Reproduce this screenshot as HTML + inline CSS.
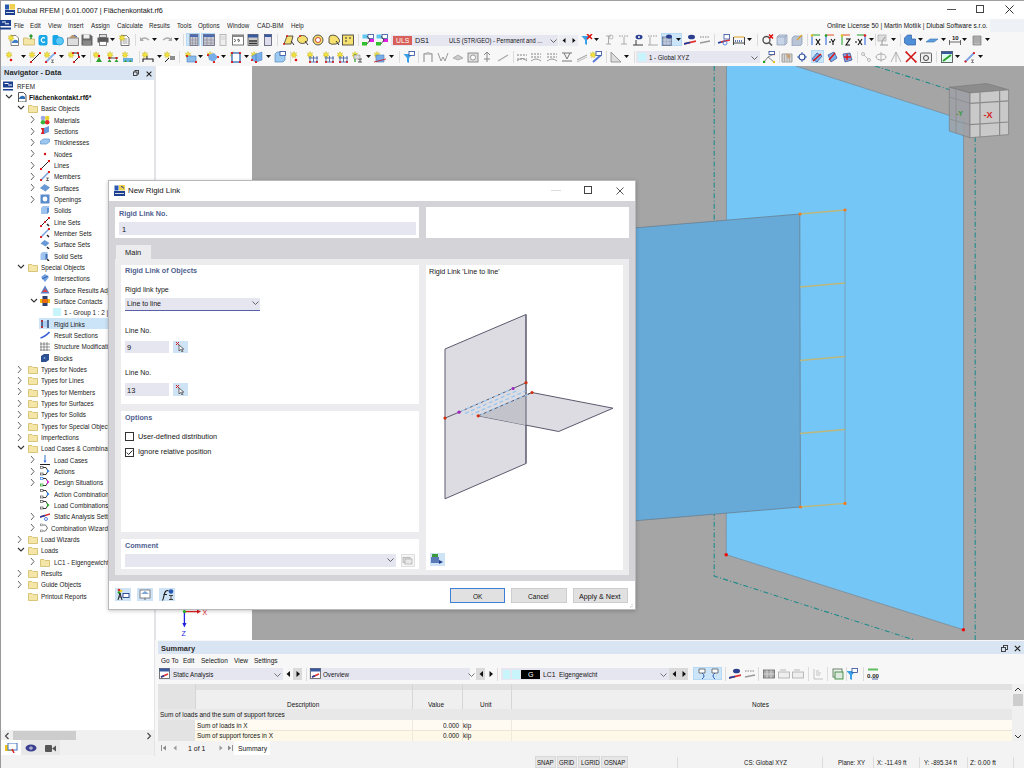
<!DOCTYPE html><html><head><meta charset="utf-8"><style>
html,body{margin:0;padding:0;width:1024px;height:768px;overflow:hidden;background:#f3f3f3;font-family:"Liberation Sans", sans-serif}
body>div,body>svg{position:absolute}
.t{position:absolute;white-space:nowrap;line-height:10px;transform-origin:0 50%;-webkit-font-smoothing:antialiased}
</style></head><body>
<div style="left:0px;top:0px;width:1024px;height:19px;background:#ffffff"></div>
<div style="left:0px;top:19px;width:1024px;height:13px;background:#f9f9f9"></div>
<div style="left:990px;top:19px;width:34px;height:13px;background:#eef2f7"></div>
<div style="left:0px;top:32px;width:1024px;height:34px;background:#f7f7f7"></div>
<div style="left:0px;top:0px;width:1px;height:768px;background:#9a9a9a"></div>
<div style="left:0px;top:0px;width:1024px;height:1px;background:#a0a0a0"></div>
<div class="t" style="left:17px;top:5.60px;font-size:8px;font-weight:400;color:#141414;transform:scaleX(0.900);">Dlubal RFEM | 6.01.0007 | Flächenkontakt.rf6</div>
<div style="left:947px;top:9px;width:9px;height:1px;background:#555"></div>
<div style="left:976px;top:5px;width:8px;height:8px;border:1px solid #444;box-sizing:border-box"></div>
<svg style="left:1005px;top:5px" width="9" height="9" viewBox="0 0 9 9"><path d="M0.5 0.5L8.5 8.5M8.5 0.5L0.5 8.5" stroke="#333" stroke-width="1"/></svg>
<div class="t" style="left:14px;top:20.60px;font-size:7.8px;font-weight:400;color:#1e1e1e;transform:scaleX(0.800);">File</div>
<div class="t" style="left:30px;top:20.60px;font-size:7.8px;font-weight:400;color:#1e1e1e;transform:scaleX(0.800);">Edit</div>
<div class="t" style="left:47.5px;top:20.60px;font-size:7.8px;font-weight:400;color:#1e1e1e;transform:scaleX(0.800);">View</div>
<div class="t" style="left:68px;top:20.60px;font-size:7.8px;font-weight:400;color:#1e1e1e;transform:scaleX(0.800);">Insert</div>
<div class="t" style="left:90.5px;top:20.60px;font-size:7.8px;font-weight:400;color:#1e1e1e;transform:scaleX(0.800);">Assign</div>
<div class="t" style="left:116.5px;top:20.60px;font-size:7.8px;font-weight:400;color:#1e1e1e;transform:scaleX(0.800);">Calculate</div>
<div class="t" style="left:149px;top:20.60px;font-size:7.8px;font-weight:400;color:#1e1e1e;transform:scaleX(0.800);">Results</div>
<div class="t" style="left:176.5px;top:20.60px;font-size:7.8px;font-weight:400;color:#1e1e1e;transform:scaleX(0.800);">Tools</div>
<div class="t" style="left:197.5px;top:20.60px;font-size:7.8px;font-weight:400;color:#1e1e1e;transform:scaleX(0.800);">Options</div>
<div class="t" style="left:226.5px;top:20.60px;font-size:7.8px;font-weight:400;color:#1e1e1e;transform:scaleX(0.800);">Window</div>
<div class="t" style="left:257px;top:20.60px;font-size:7.8px;font-weight:400;color:#1e1e1e;transform:scaleX(0.800);">CAD-BIM</div>
<div class="t" style="left:290.5px;top:20.60px;font-size:7.8px;font-weight:400;color:#1e1e1e;transform:scaleX(0.800);">Help</div>
<div class="t" style="left:827px;top:20.60px;font-size:7.8px;font-weight:400;color:#141414;transform:scaleX(0.828);">Online License 50 | Martin Motlík | Dlubal Software s.r.o.</div>
<div style="left:186px;top:32.5px;width:13.5px;height:13.5px;background:#cde5f8;border:1px solid #b5d8f5;box-sizing:border-box"></div>
<div style="left:201px;top:32.5px;width:13.699999999999989px;height:13.5px;background:#cde5f8;border:1px solid #b5d8f5;box-sizing:border-box"></div>
<div style="left:660.8px;top:33px;width:21.5px;height:13px;background:#cde5f8;border:1px solid #b5d8f5;box-sizing:border-box"></div>
<div style="left:810.8px;top:50px;width:13.700000000000045px;height:13px;background:#cde5f8;border:1px solid #b5d8f5;box-sizing:border-box"></div>
<svg style="left:7.7px;top:33.5px" width="12" height="12" viewBox="0 0 12 12"><path d="M3 1.5h5l2.5 2.5v7.5h-7.5z" fill="#fff" stroke="#666" stroke-width=".8"/><path d="M4 8q3-4 6-1v2h-6z" fill="#3f7fc5"/><path d="M3 0.5l.8 1.9 2-.6-1.2 1.7 1.7 1.2-2 .2.1 2-1.4-1.4-1.4 1.4.1-2-2-.2 1.7-1.2-1.2-1.7 2 .6z" fill="#f2e33a" stroke="#c8b020" stroke-width=".4"/></svg>
<svg style="left:22.9px;top:33.5px" width="12" height="12" viewBox="0 0 12 12"><path d="M0.5 4h4l1 1h6v6h-11z" fill="#f3e6a6" stroke="#cbb56a" stroke-width=".8"/><path d="M8 5V1M6.5 2.5L8 1l1.5 1.5" stroke="#2a9a2a" stroke-width="1.4" fill="none"/></svg>
<svg style="left:36.6px;top:33.5px" width="12" height="12" viewBox="0 0 12 12"><rect x="1.5" y="1" width="9" height="10.5" rx="2" fill="#18a8e8"/><path d="M8 4.2a2.3 2.3 0 1 0 0 3.6" stroke="#fff" stroke-width="1.2" fill="none"/></svg>
<svg style="left:51.6px;top:33.5px" width="12" height="12" viewBox="0 0 12 12"><rect x="0.5" y="1" width="6" height="10" rx="1.5" fill="#18a8e8"/><circle cx="7.5" cy="7" r="4" fill="#5ac8f8" stroke="#1898d8" stroke-width=".8"/></svg>
<svg style="left:67.2px;top:33.5px" width="12" height="12" viewBox="0 0 12 12"><rect x="0.5" y="4" width="11" height="7.5" fill="#ddd" stroke="#777" stroke-width=".8"/><path d="M2 4l3-3h3l2 3z" fill="#b89870"/><path d="M7 1l3 2" stroke="#3060c0" stroke-width="1"/></svg>
<svg style="left:81.3px;top:33.5px" width="12" height="12" viewBox="0 0 12 12"><path d="M0.5 0.5h9l2 2v9h-11z" fill="#666"/><rect x="2.5" y="0.5" width="6" height="4" fill="#eee"/><rect x="2" y="6.5" width="8" height="5" fill="#888"/></svg>
<svg style="left:96.5px;top:33.5px" width="12" height="12" viewBox="0 0 12 12"><rect x="2.5" y="0.5" width="7" height="3" fill="#ddd" stroke="#666" stroke-width=".8"/><rect x="0.5" y="3.5" width="11" height="5" fill="#5a5a5a"/><rect x="2.5" y="7.5" width="7" height="4" fill="#fff" stroke="#666" stroke-width=".8"/></svg>
<svg style="left:119.0px;top:33.5px" width="12" height="12" viewBox="0 0 12 12"><path d="M2 1.5h5.5l2.5 2.5v7.5h-8z" fill="#fff" stroke="#555" stroke-width=".8"/><path d="M3.5 5h5M3.5 7h5M3.5 9h5" stroke="#777" stroke-width=".7"/><path d="M3 0.5l.8 1.9 2-.6-1.2 1.7 1.7 1.2-2 .2.1 2-1.4-1.4-1.4 1.4.1-2-2-.2 1.7-1.2-1.2-1.7 2 .6z" fill="#f2e33a" stroke="#c8b020" stroke-width=".4"/></svg>
<svg style="left:138.5px;top:33.5px" width="12" height="12" viewBox="0 0 12 12"><path d="M2 6q3-4 8 0" stroke="#aaa" stroke-width="1.3" fill="none"/><path d="M1 3v4h4z" fill="#aaa"/></svg>
<svg style="left:161.0px;top:33.5px" width="12" height="12" viewBox="0 0 12 12"><path d="M2 6q5-4 8 0" stroke="#aaa" stroke-width="1.3" fill="none"/><path d="M11 3v4h-4z" fill="#aaa"/></svg>
<svg style="left:188.0px;top:33.5px" width="12" height="12" viewBox="0 0 12 12"><rect x="2" y="0.5" width="8" height="11" fill="#c8c8d0" stroke="#667" stroke-width=".8"/><rect x="2" y="0.5" width="8" height="2.5" fill="#4a6ab0"/><path d="M4.5 3v8.5M7.5 3v8.5M2 6h8M2 9h8" stroke="#889" stroke-width=".6"/></svg>
<svg style="left:202.5px;top:33.5px" width="12" height="12" viewBox="0 0 12 12"><rect x="0.5" y="0.5" width="11" height="11" fill="#c8c8d0" stroke="#667" stroke-width=".8"/><rect x="0.5" y="0.5" width="11" height="2.5" fill="#4a6ab0"/><path d="M4 3v8.5M8 3v8.5M.5 6h11M.5 9h11" stroke="#889" stroke-width=".6"/></svg>
<svg style="left:217.0px;top:33.5px" width="12" height="12" viewBox="0 0 12 12"><rect x="3" y="0.5" width="6" height="11" fill="#eee" stroke="#aaa" stroke-width=".8"/><path d="M4 3h4M4 5h4" stroke="#bbb" stroke-width=".6"/></svg>
<svg style="left:232.0px;top:33.5px" width="12" height="12" viewBox="0 0 12 12"><rect x="0.5" y="1" width="11" height="10" fill="#fff" stroke="#666" stroke-width=".9"/><rect x="0.5" y="1" width="11" height="2" fill="#888"/><path d="M2 5l2 1.5-2 1.5M5 6h2M6 5l2 1.5-2 1.5" stroke="#333" stroke-width=".7" fill="none"/></svg>
<svg style="left:247.0px;top:33.5px" width="12" height="12" viewBox="0 0 12 12"><rect x="1" y="0.5" width="10" height="11" fill="#ccc" stroke="#555" stroke-width=".8"/><rect x="1" y="0.5" width="10" height="3" fill="#3a5aa0"/><path d="M2 7h8M2 9.5h8" stroke="#333" stroke-width="1.3"/></svg>
<svg style="left:261.7px;top:33.5px" width="12" height="12" viewBox="0 0 12 12"><rect x="2.5" y="0.5" width="7" height="11" fill="#dde" stroke="#556" stroke-width=".8"/><rect x="2.5" y="0.5" width="7" height="2.5" fill="#3a5aa0"/></svg>
<svg style="left:282.6px;top:33.5px" width="12" height="12" viewBox="0 0 12 12"><path d="M1 10l3-8h6l-2 8z" fill="#f5e070" stroke="#333" stroke-width=".8"/><circle cx="1" cy="10" r="1" fill="#e02020"/><circle cx="4" cy="2" r="1" fill="#e02020"/><path d="M8 7l3 4" stroke="#333" stroke-width="1"/></svg>
<svg style="left:297.0px;top:33.5px" width="12" height="12" viewBox="0 0 12 12"><ellipse cx="5.5" cy="5.5" rx="5" ry="4" fill="#f5e070" stroke="#333" stroke-width=".8"/><circle cx="3" cy="2" r="1" fill="#e02020"/><path d="M8 7l3 4" stroke="#333" stroke-width="1"/></svg>
<svg style="left:312.0px;top:33.5px" width="12" height="12" viewBox="0 0 12 12"><circle cx="6" cy="6" r="5" fill="#f5e070" stroke="#333" stroke-width=".8"/><circle cx="6" cy="6" r="2.5" fill="#fff" stroke="#c02020" stroke-width=".8"/></svg>
<svg style="left:327.5px;top:33.5px" width="12" height="12" viewBox="0 0 12 12"><path d="M1 4q0-3 4-3t6 4-3 5-7-1z" fill="#f5e070" stroke="#333" stroke-width=".8"/><path d="M8 7l3 4" stroke="#333" stroke-width="1"/></svg>
<svg style="left:342.0px;top:33.5px" width="12" height="12" viewBox="0 0 12 12"><rect x="0.5" y="1" width="11" height="10" fill="#f5e070" stroke="#333" stroke-width=".8"/><path d="M3 4h2M3 7h2M7 4h2" stroke="#333" stroke-width="1"/></svg>
<svg style="left:361.7px;top:33.5px" width="12" height="12" viewBox="0 0 12 12"><rect x="0.5" y="0.5" width="5" height="4" fill="#60c8f0"/><rect x="6" y="0.5" width="5.5" height="4" fill="#fff" stroke="#3050a0" stroke-width=".8"/><rect x="7" y="5" width="5" height="3" fill="#e020e0"/><rect x="0" y="8" width="5" height="3.5" fill="#30c030"/><path d="M5 2l3 4-3 4" stroke="#333" stroke-width=".8" fill="none"/></svg>
<svg style="left:376.0px;top:33.5px" width="12" height="12" viewBox="0 0 12 12"><rect x="0.5" y="0.5" width="5" height="4" fill="#60c8f0"/><rect x="6" y="0.5" width="5.5" height="4" fill="#fff" stroke="#3050a0" stroke-width=".8"/><rect x="7" y="5" width="5" height="3" fill="#e020e0"/><rect x="0" y="8" width="5" height="3.5" fill="#30c030"/><path d="M5 2l3 4-3 4" stroke="#333" stroke-width=".8" fill="none"/></svg>
<svg style="left:580.6px;top:33.5px" width="12" height="12" viewBox="0 0 12 12"><path d="M0.5 2h9l-3.5 4v5l-2-1v-4z" fill="#3aa0e8"/><path d="M6 0l5 5M11 0l-5 5" stroke="#e01010" stroke-width="1.5"/></svg>
<svg style="left:603.0px;top:33.5px" width="12" height="12" viewBox="0 0 12 12"><path d="M3 2h5M5.5 2v8M3 10h5" stroke="#aaa" stroke-width="1" fill="none"/><circle cx="8" cy="3" r="2" fill="none" stroke="#aaa" stroke-width=".8"/></svg>
<svg style="left:617.7px;top:33.5px" width="12" height="12" viewBox="0 0 12 12"><path d="M1 2h10" stroke="#999" stroke-width="1" stroke-dasharray="1.5 1"/><path d="M6 3v7M3 10h6" stroke="#aaa" stroke-width="1"/></svg>
<svg style="left:632.0px;top:33.5px" width="12" height="12" viewBox="0 0 12 12"><ellipse cx="7" cy="3" rx="3.5" ry="2.3" fill="#2a3f8f"/><circle cx="7" cy="3" r="1" fill="#fff"/><path d="M4 6v5M1 11h10" stroke="#3a3a3a" stroke-width="1"/></svg>
<svg style="left:647.0px;top:33.5px" width="12" height="12" viewBox="0 0 12 12"><path d="M1 2h10" stroke="#999" stroke-width="1" stroke-dasharray="1.5 1"/><path d="M3 3v8M1 11h10" stroke="#aaa" stroke-width="1"/></svg>
<svg style="left:662.0px;top:33.5px" width="12" height="12" viewBox="0 0 12 12"><rect x="0.5" y="3" width="9" height="8.5" fill="#98a8c0" stroke="#5a6a8a" stroke-width=".7"/><path d="M3 3v8M6 3v8M.5 6h9M.5 9h9" stroke="#eef" stroke-width=".5"/><ellipse cx="7" cy="2.5" rx="3" ry="2" fill="#2a3f8f"/></svg>
<svg style="left:684.0px;top:33.5px" width="12" height="12" viewBox="0 0 12 12"><path d="M0 10l12-3" stroke="#e03030" stroke-width="1.8"/><path d="M0 10l6-1.5" stroke="#1f3f9f" stroke-width="1.8"/><ellipse cx="7.5" cy="3" rx="3.5" ry="2.3" fill="#2a3f8f"/></svg>
<svg style="left:698.8px;top:33.5px" width="12" height="12" viewBox="0 0 12 12"><path d="M1 3h10" stroke="#777" stroke-width=".9" stroke-dasharray="1.5 1"/><path d="M1 9l10-2" stroke="#999" stroke-width="1.4"/></svg>
<svg style="left:718.0px;top:33.5px" width="12" height="12" viewBox="0 0 12 12"><path d="M0 9l7-2" stroke="#1f3f9f" stroke-width="1.8"/><path d="M3 8l9-2" stroke="#e03030" stroke-width="1.4"/><rect x="6" y="0.5" width="5.5" height="4.5" fill="#fff" stroke="#3050a0" stroke-width=".8"/><circle cx="7" cy="9" r="2" fill="none" stroke="#3070e0" stroke-width=".8"/></svg>
<svg style="left:733.0px;top:33.5px" width="12" height="12" viewBox="0 0 12 12"><path d="M0.5 3v8M11.5 3v8M.5 9h11" stroke="#333" stroke-width=".9"/><path d="M2 7h8" stroke="#3050a0" stroke-width="1.3" stroke-dasharray="1 1"/><path d="M1 3h10" stroke="#e0a020" stroke-width="1"/></svg>
<svg style="left:761.8px;top:33.5px" width="12" height="12" viewBox="0 0 12 12"><circle cx="4.5" cy="6" r="3.5" fill="none" stroke="#555" stroke-width="1.4"/><path d="M7 8.5l3 3" stroke="#555" stroke-width="1.6"/><path d="M7 0.5l4 4M11 0.5l-4 4" stroke="#e01010" stroke-width="1.5"/></svg>
<svg style="left:775.5px;top:33.5px" width="12" height="12" viewBox="0 0 12 12"><path d="M1 3l2-2h8v8l-2 2h-8z" fill="#c8d4e8" stroke="#8898b0" stroke-width=".7"/><path d="M1 3h8v8M9 3l2-2" stroke="#8898b0" stroke-width=".7" fill="none"/></svg>
<svg style="left:791.0px;top:33.5px" width="12" height="12" viewBox="0 0 12 12"><path d="M1 4l2-2h8v8l-2 2h-8z" fill="#b8c4d8" stroke="#8898b0" stroke-width=".7"/><path d="M6 6l5-5" stroke="#e0a020" stroke-width="1.2"/></svg>
<svg style="left:809.7px;top:33.5px" width="12" height="12" viewBox="0 0 12 12"><path d="M2 1h8" stroke="#20a020" stroke-width="1"/><path d="M2 1v10" stroke="#1f5fe0" stroke-width="1"/><circle cx="2" cy="1.5" r="1.3" fill="#e0c020"/><path d="M6 5l4 6M10 5l-4 6" stroke="#111" stroke-width="1.2"/></svg>
<svg style="left:824.0px;top:33.5px" width="12" height="12" viewBox="0 0 12 12"><path d="M2 1h8" stroke="#e05020" stroke-width="1"/><path d="M2 1v10" stroke="#1f5fe0" stroke-width="1"/><circle cx="2" cy="1.5" r="1.3" fill="#20a020"/><path d="M5 8h2M7 5l2 3 2-3M9 8v3" stroke="#111" stroke-width="1.1" fill="none"/></svg>
<svg style="left:840.0px;top:33.5px" width="12" height="12" viewBox="0 0 12 12"><path d="M2 1h8" stroke="#e05020" stroke-width="1"/><path d="M2 1v10" stroke="#20a020" stroke-width="1"/><circle cx="2" cy="1.5" r="1.3" fill="#e0c020"/><path d="M6 5h4l-4 6h4" stroke="#111" stroke-width="1.1" fill="none"/></svg>
<svg style="left:854.6px;top:33.5px" width="12" height="12" viewBox="0 0 12 12"><path d="M2 1h8" stroke="#20a020" stroke-width="1"/><path d="M10 1v10" stroke="#1f5fe0" stroke-width="1"/><circle cx="10" cy="1.5" r="1.3" fill="#e02020"/><path d="M0 8h2M3 5l4 6M7 5l-4 6" stroke="#111" stroke-width="1.1"/></svg>
<svg style="left:877.0px;top:33.5px" width="12" height="12" viewBox="0 0 12 12"><rect x="1" y="1" width="8" height="6" fill="#ddd" stroke="#aaa" stroke-width=".7"/><path d="M3 11h8M5 7v4M8 3l-3 4" stroke="#999" stroke-width="1"/></svg>
<svg style="left:904.0px;top:33.5px" width="12" height="12" viewBox="0 0 12 12"><path d="M0.5 4l3-3h4v4h4v6h-8l-3-2z" fill="#4f8fd8" stroke="#2f5fa8" stroke-width=".7"/></svg>
<svg style="left:926.0px;top:33.5px" width="12" height="12" viewBox="0 0 12 12"><path d="M0 8l4-3h8l-4 3z" fill="#5aa0e0" stroke="#3a70b0" stroke-width=".6"/></svg>
<svg style="left:949.0px;top:33.5px" width="12" height="12" viewBox="0 0 12 12"><path d="M0.5 6v5M11.5 6v5M.5 8h11" stroke="#444" stroke-width=".8"/><text x="3" y="6" font-size="6" font-family="Liberation Sans" font-weight="700" fill="#222">10</text></svg>
<svg style="left:971.0px;top:33.5px" width="12" height="12" viewBox="0 0 12 12"><path d="M2 2h8v9h-8z" fill="#bbb" stroke="#777" stroke-width=".7"/><path d="M2 4h8M2 6h8M2 8h8" stroke="#888" stroke-width=".6"/></svg>
<svg style="left:110.2px;top:38.0px" width="5" height="3"><path d="M0 0h5l-2.5 3z" fill="#111"/></svg>
<svg style="left:151.5px;top:38.0px" width="5" height="3"><path d="M0 0h5l-2.5 3z" fill="#111"/></svg>
<svg style="left:174.3px;top:38.0px" width="5" height="3"><path d="M0 0h5l-2.5 3z" fill="#111"/></svg>
<svg style="left:593.5px;top:38.0px" width="5" height="3"><path d="M0 0h5l-2.5 3z" fill="#111"/></svg>
<svg style="left:675.5px;top:38.0px" width="5" height="3"><path d="M0 0h5l-2.5 3z" fill="#111"/></svg>
<svg style="left:747.2px;top:38.0px" width="5" height="3"><path d="M0 0h5l-2.5 3z" fill="#111"/></svg>
<svg style="left:868.5px;top:38.0px" width="5" height="3"><path d="M0 0h5l-2.5 3z" fill="#111"/></svg>
<svg style="left:891.3px;top:38.0px" width="5" height="3"><path d="M0 0h5l-2.5 3z" fill="#111"/></svg>
<svg style="left:917.5px;top:38.0px" width="5" height="3"><path d="M0 0h5l-2.5 3z" fill="#111"/></svg>
<svg style="left:940.5px;top:38.0px" width="5" height="3"><path d="M0 0h5l-2.5 3z" fill="#111"/></svg>
<svg style="left:962.1px;top:38.0px" width="5" height="3"><path d="M0 0h5l-2.5 3z" fill="#111"/></svg>
<svg style="left:984.5px;top:38.0px" width="5" height="3"><path d="M0 0h5l-2.5 3z" fill="#111"/></svg>
<div style="left:134.8px;top:34px;width:1px;height:12px;background:#dcdcdc"></div>
<div style="left:182.6px;top:34px;width:1px;height:12px;background:#dcdcdc"></div>
<div style="left:277px;top:34px;width:1px;height:12px;background:#dcdcdc"></div>
<div style="left:358px;top:34px;width:1px;height:12px;background:#dcdcdc"></div>
<div style="left:713.5px;top:34px;width:1px;height:12px;background:#dcdcdc"></div>
<div style="left:756.5px;top:34px;width:1px;height:12px;background:#dcdcdc"></div>
<div style="left:807px;top:34px;width:1px;height:12px;background:#dcdcdc"></div>
<div style="left:875px;top:34px;width:1px;height:12px;background:#dcdcdc"></div>
<div style="left:899.6px;top:34px;width:1px;height:12px;background:#dcdcdc"></div>
<svg style="left:6.0px;top:50.5px" width="12" height="12" viewBox="0 0 12 12"><path d="M3 0.5l.8 1.9 2-.6-1.2 1.7 1.7 1.2-2 .2.1 2-1.4-1.4-1.4 1.4.1-2-2-.2 1.7-1.2-1.2-1.7 2 .6z" fill="#f2e33a" stroke="#c8b020" stroke-width=".4"/><circle cx="5" cy="9" r="1.3" fill="#e01010"/></svg>
<svg style="left:29.0px;top:50.5px" width="12" height="12" viewBox="0 0 12 12"><path d="M3 0.5l.8 1.9 2-.6-1.2 1.7 1.7 1.2-2 .2.1 2-1.4-1.4-1.4 1.4.1-2-2-.2 1.7-1.2-1.2-1.7 2 .6z" fill="#f2e33a" stroke="#c8b020" stroke-width=".4"/><path d="M2 11L11 2" stroke="#222" stroke-width="1"/><circle cx="2" cy="11" r="1.1" fill="#e01010"/><circle cx="11" cy="2" r="1.1" fill="#e01010"/></svg>
<svg style="left:43.8px;top:50.5px" width="12" height="12" viewBox="0 0 12 12"><path d="M3 0.5l.8 1.9 2-.6-1.2 1.7 1.7 1.2-2 .2.1 2-1.4-1.4-1.4 1.4.1-2-2-.2 1.7-1.2-1.2-1.7 2 .6z" fill="#f2e33a" stroke="#c8b020" stroke-width=".4"/><path d="M2 11L11 2" stroke="#8ab0e8" stroke-width="1.8"/><circle cx="2" cy="11" r="1.1" fill="#e01010"/><circle cx="11" cy="2" r="1.1" fill="#e01010"/><path d="M7 9h3M8.5 9v2.5M7 11.5h3" stroke="#444" stroke-width=".6"/></svg>
<svg style="left:67.8px;top:50.5px" width="12" height="12" viewBox="0 0 12 12"><path d="M3 0.5l.8 1.9 2-.6-1.2 1.7 1.7 1.2-2 .2.1 2-1.4-1.4-1.4 1.4.1-2-2-.2 1.7-1.2-1.2-1.7 2 .6z" fill="#f2e33a" stroke="#c8b020" stroke-width=".4"/><path d="M5 2h5l1 4-5 5" stroke="#222" stroke-width="1" fill="none"/><circle cx="5" cy="2" r="1.1" fill="#e01010"/><circle cx="10" cy="2" r="1.1" fill="#e01010"/><circle cx="11" cy="6" r="1.1" fill="#e01010"/><circle cx="6" cy="11" r="1.1" fill="#e01010"/></svg>
<svg style="left:92.6px;top:50.5px" width="12" height="12" viewBox="0 0 12 12"><path d="M3 0.5l.8 1.9 2-.6-1.2 1.7 1.7 1.2-2 .2.1 2-1.4-1.4-1.4 1.4.1-2-2-.2 1.7-1.2-1.2-1.7 2 .6z" fill="#f2e33a" stroke="#c8b020" stroke-width=".4"/><path d="M3 11l3-5 3 5z" fill="#30a030"/><circle cx="6" cy="5" r="1.2" fill="#e01010"/></svg>
<svg style="left:107.0px;top:50.5px" width="12" height="12" viewBox="0 0 12 12"><path d="M3 0.5l.8 1.9 2-.6-1.2 1.7 1.7 1.2-2 .2.1 2-1.4-1.4-1.4 1.4.1-2-2-.2 1.7-1.2-1.2-1.7 2 .6z" fill="#f2e33a" stroke="#c8b020" stroke-width=".4"/><path d="M0.5 11l2-3 2 3zM7.5 11l2-3 2 3z" fill="#30a030"/><path d="M1 7h10" stroke="#222" stroke-width=".8"/><circle cx="2.5" cy="7" r="1.1" fill="#e01010"/><circle cx="9.5" cy="7" r="1.1" fill="#e01010"/></svg>
<svg style="left:122.0px;top:50.5px" width="12" height="12" viewBox="0 0 12 12"><path d="M3 0.5l.8 1.9 2-.6-1.2 1.7 1.7 1.2-2 .2.1 2-1.4-1.4-1.4 1.4.1-2-2-.2 1.7-1.2-1.2-1.7 2 .6z" fill="#f2e33a" stroke="#c8b020" stroke-width=".4"/><path d="M1 7h10v4h-10z" fill="#6ab0e0"/><path d="M2 11l1.5-2 1.5 2zM7 11l1.5-2 1.5 2z" fill="#30a030"/></svg>
<svg style="left:142.4px;top:50.5px" width="12" height="12" viewBox="0 0 12 12"><path d="M3 0.5l.8 1.9 2-.6-1.2 1.7 1.7 1.2-2 .2.1 2-1.4-1.4-1.4 1.4.1-2-2-.2 1.7-1.2-1.2-1.7 2 .6z" fill="#f2e33a" stroke="#c8b020" stroke-width=".4"/><path d="M1 11V8h10v3" stroke="#222" stroke-width="1.1" fill="none"/><path d="M5 5v3" stroke="#222" stroke-width=".9"/></svg>
<svg style="left:164.0px;top:50.5px" width="12" height="12" viewBox="0 0 12 12"><path d="M3 0.5l.8 1.9 2-.6-1.2 1.7 1.7 1.2-2 .2.1 2-1.4-1.4-1.4 1.4.1-2-2-.2 1.7-1.2-1.2-1.7 2 .6z" fill="#f2e33a" stroke="#c8b020" stroke-width=".4"/><path d="M1 11l4-4M6 8h5M6 6h5" stroke="#222" stroke-width="1" fill="none"/></svg>
<svg style="left:185.4px;top:50.5px" width="12" height="12" viewBox="0 0 12 12"><path d="M3 0.5l.8 1.9 2-.6-1.2 1.7 1.7 1.2-2 .2.1 2-1.4-1.4-1.4 1.4.1-2-2-.2 1.7-1.2-1.2-1.7 2 .6z" fill="#f2e33a" stroke="#c8b020" stroke-width=".4"/><path d="M2 5h9v6h-9z" fill="#8abce8" stroke="#4a80c0" stroke-width=".6"/><circle cx="2" cy="5" r="1.1" fill="#e01010"/><circle cx="11" cy="11" r="1.1" fill="#e01010"/></svg>
<svg style="left:206.5px;top:50.5px" width="12" height="12" viewBox="0 0 12 12"><path d="M3 0.5l.8 1.9 2-.6-1.2 1.7 1.7 1.2-2 .2.1 2-1.4-1.4-1.4 1.4.1-2-2-.2 1.7-1.2-1.2-1.7 2 .6z" fill="#f2e33a" stroke="#c8b020" stroke-width=".4"/><path d="M1 4l6-2 4 4-4 5-5-2z" fill="#7aaee8"/><circle cx="1" cy="4" r="1.1" fill="#e01010"/><circle cx="11" cy="6" r="1.1" fill="#e01010"/><circle cx="7" cy="11" r="1.1" fill="#e01010"/></svg>
<svg style="left:230.0px;top:50.5px" width="12" height="12" viewBox="0 0 12 12"><path d="M3 0.5l.8 1.9 2-.6-1.2 1.7 1.7 1.2-2 .2.1 2-1.4-1.4-1.4 1.4.1-2-2-.2 1.7-1.2-1.2-1.7 2 .6z" fill="#f2e33a" stroke="#c8b020" stroke-width=".4"/><rect x="2" y="2" width="8" height="9" fill="#fff" stroke="#4a80c0" stroke-width="1.5"/><circle cx="2" cy="2" r="1.1" fill="#e01010"/><circle cx="10" cy="2" r="1.1" fill="#e01010"/><circle cx="2" cy="11" r="1.1" fill="#e01010"/><circle cx="10" cy="11" r="1.1" fill="#e01010"/></svg>
<svg style="left:251.0px;top:50.5px" width="12" height="12" viewBox="0 0 12 12"><path d="M3 0.5l.8 1.9 2-.6-1.2 1.7 1.7 1.2-2 .2.1 2-1.4-1.4-1.4 1.4.1-2-2-.2 1.7-1.2-1.2-1.7 2 .6z" fill="#f2e33a" stroke="#c8b020" stroke-width=".4"/><path d="M1 5l4-2v8l-4-2zM5 3l6-2v8l-6 2z" fill="#7aaee8" stroke="#4a80c0" stroke-width=".5"/><circle cx="1" cy="9" r="1.1" fill="#e01010"/><circle cx="5" cy="11" r="1.1" fill="#e01010"/></svg>
<svg style="left:274.0px;top:50.5px" width="12" height="12" viewBox="0 0 12 12"><path d="M1 3l2-2h8v8l-2 2h-8z" fill="#9ccaf0" stroke="#5a8ac0" stroke-width=".7"/><rect x="6" y="0.5" width="5.5" height="4" fill="#fff" stroke="#2a4a9a" stroke-width=".8"/></svg>
<svg style="left:291.0px;top:50.5px" width="12" height="12" viewBox="0 0 12 12"><path d="M3 0.5l.8 1.9 2-.6-1.2 1.7 1.7 1.2-2 .2.1 2-1.4-1.4-1.4 1.4.1-2-2-.2 1.7-1.2-1.2-1.7 2 .6z" fill="#f2e33a" stroke="#c8b020" stroke-width=".4"/><circle cx="5" cy="9" r="1.3" fill="#e01010"/></svg>
<svg style="left:307.0px;top:50.5px" width="12" height="12" viewBox="0 0 12 12"><path d="M3 0.5l.8 1.9 2-.6-1.2 1.7 1.7 1.2-2 .2.1 2-1.4-1.4-1.4 1.4.1-2-2-.2 1.7-1.2-1.2-1.7 2 .6z" fill="#f2e33a" stroke="#c8b020" stroke-width=".4"/><path d="M2 7h9M2 11h9M3 5v6M6.5 5v6M10 5v6" stroke="#3a5aa0" stroke-width=".8"/><circle cx="3" cy="11" r="1" fill="#e01010"/><circle cx="10" cy="11" r="1" fill="#e01010"/></svg>
<svg style="left:322.7px;top:50.5px" width="12" height="12" viewBox="0 0 12 12"><path d="M3 0.5l.8 1.9 2-.6-1.2 1.7 1.7 1.2-2 .2.1 2-1.4-1.4-1.4 1.4.1-2-2-.2 1.7-1.2-1.2-1.7 2 .6z" fill="#f2e33a" stroke="#c8b020" stroke-width=".4"/><path d="M2 7h9M2 11h9M3 5v6M6.5 5v6M10 5v6" stroke="#3a5aa0" stroke-width=".8"/><circle cx="3" cy="11" r="1" fill="#e01010"/><circle cx="10" cy="11" r="1" fill="#e01010"/></svg>
<svg style="left:337.0px;top:50.5px" width="12" height="12" viewBox="0 0 12 12"><path d="M3 0.5l.8 1.9 2-.6-1.2 1.7 1.7 1.2-2 .2.1 2-1.4-1.4-1.4 1.4.1-2-2-.2 1.7-1.2-1.2-1.7 2 .6z" fill="#f2e33a" stroke="#c8b020" stroke-width=".4"/><path d="M2 7h9M2 11h9M3 5v6M6.5 5v6M10 5v6" stroke="#3a5aa0" stroke-width=".8"/><circle cx="3" cy="11" r="1" fill="#e01010"/><circle cx="10" cy="11" r="1" fill="#e01010"/></svg>
<svg style="left:352.0px;top:50.5px" width="12" height="12" viewBox="0 0 12 12"><path d="M3 0.5l.8 1.9 2-.6-1.2 1.7 1.7 1.2-2 .2.1 2-1.4-1.4-1.4 1.4.1-2-2-.2 1.7-1.2-1.2-1.7 2 .6z" fill="#f2e33a" stroke="#c8b020" stroke-width=".4"/><path d="M3 3v8" stroke="#20a020" stroke-width="1.2"/><path d="M6 8h4M8 8v3M6 11h4" stroke="#333" stroke-width=".8"/><path d="M2 4h6v4h-6z" fill="#ddd" stroke="#777" stroke-width=".5"/></svg>
<svg style="left:374.0px;top:50.5px" width="12" height="12" viewBox="0 0 12 12"><path d="M3 0.5l.8 1.9 2-.6-1.2 1.7 1.7 1.2-2 .2.1 2-1.4-1.4-1.4 1.4.1-2-2-.2 1.7-1.2-1.2-1.7 2 .6z" fill="#f2e33a" stroke="#c8b020" stroke-width=".4"/><path d="M2 4h8v7h-8z" fill="#7aaee8" stroke="#4a80c0" stroke-width=".6"/><path d="M0 11l12-3" stroke="#e01010" stroke-width=".8"/></svg>
<svg style="left:403.0px;top:50.5px" width="12" height="12" viewBox="0 0 12 12"><path d="M0.5 3h9l-3.5 4v5l-2-1v-4z" fill="#3aa0e8"/><rect x="6" y="0.5" width="5.5" height="4" fill="#fff" stroke="#2a4a9a" stroke-width=".8"/></svg>
<svg style="left:422.0px;top:50.5px" width="12" height="12" viewBox="0 0 12 12"><path d="M2 11V3h8v8" stroke="#999" stroke-width="1.2" fill="none"/><path d="M2 3q4-3 8 0" stroke="#999" stroke-width=".8" fill="none"/></svg>
<svg style="left:436.5px;top:50.5px" width="12" height="12" viewBox="0 0 12 12"><path d="M1 2l3 8 2-4 2 4 3-8" stroke="#999" stroke-width="1" fill="none"/></svg>
<svg style="left:452.0px;top:50.5px" width="12" height="12" viewBox="0 0 12 12"><path d="M1 7l5-3 5 3-5 2z" fill="#ccc" stroke="#999" stroke-width=".7"/></svg>
<svg style="left:466.8px;top:50.5px" width="12" height="12" viewBox="0 0 12 12"><rect x="1" y="2" width="10" height="9" fill="#ddd" stroke="#888" stroke-width=".9"/><circle cx="6" cy="6.5" r="2.5" fill="#fff" stroke="#888" stroke-width=".8"/></svg>
<svg style="left:481.4px;top:50.5px" width="12" height="12" viewBox="0 0 12 12"><path d="M6 1v10M3 4l3-3 3 3M3 8h6" stroke="#888" stroke-width="1" fill="none"/></svg>
<svg style="left:497.0px;top:50.5px" width="12" height="12" viewBox="0 0 12 12"><path d="M1 10l10-6" stroke="#aaa" stroke-width="1.4"/></svg>
<svg style="left:515.6px;top:50.5px" width="12" height="12" viewBox="0 0 12 12"><path d="M1 4h10M1 8h10" stroke="#777" stroke-width=".9" stroke-dasharray="2 1"/><path d="M1 10q5-5 10 0" stroke="#999" stroke-width="1" fill="none"/></svg>
<svg style="left:530.0px;top:50.5px" width="12" height="12" viewBox="0 0 12 12"><path d="M1 3h10M1 6h10" stroke="#777" stroke-width=".9" stroke-dasharray="2 1"/><path d="M1 10q5-4 10 0" stroke="#999" stroke-width="1" fill="none"/></svg>
<svg style="left:545.9px;top:50.5px" width="12" height="12" viewBox="0 0 12 12"><path d="M1 3h10M1 6h10" stroke="#777" stroke-width=".9" stroke-dasharray="2 1"/><path d="M1 10q5-4 10 0" stroke="#999" stroke-width="1" fill="none"/></svg>
<svg style="left:560.5px;top:50.5px" width="12" height="12" viewBox="0 0 12 12"><path d="M1 2h10M3 2l3 6 3-6M1 10h10" stroke="#777" stroke-width="1" fill="none"/></svg>
<svg style="left:576.0px;top:50.5px" width="12" height="12" viewBox="0 0 12 12"><path d="M1 9l10-5" stroke="#999" stroke-width="1"/><path d="M1 11l10-5" stroke="#bbb" stroke-width="1"/></svg>
<svg style="left:590.0px;top:50.5px" width="12" height="12" viewBox="0 0 12 12"><path d="M3 0.5l.8 1.9 2-.6-1.2 1.7 1.7 1.2-2 .2.1 2-1.4-1.4-1.4 1.4.1-2-2-.2 1.7-1.2-1.2-1.7 2 .6z" fill="#f2e33a" stroke="#c8b020" stroke-width=".4"/><path d="M3 11l8-7" stroke="#5a7ad8" stroke-width="2"/><rect x="6" y="0.5" width="5.5" height="4" fill="#fff" stroke="#2a4a9a" stroke-width=".8"/></svg>
<svg style="left:610.0px;top:50.5px" width="12" height="12" viewBox="0 0 12 12"><path d="M1 11V1l10 10z" fill="#ddd" stroke="#888" stroke-width=".8"/></svg>
<svg style="left:762.8px;top:50.5px" width="12" height="12" viewBox="0 0 12 12"><path d="M5 6l6-3M5 6l-4 5M5 6l6 5" stroke="#666" stroke-width=".8"/><circle cx="11" cy="3" r="1.3" fill="#e05020"/><circle cx="1" cy="11" r="1.3" fill="#20a020"/><circle cx="11" cy="11" r="1.3" fill="#e0c020"/><rect x="6" y="0.5" width="5.5" height="3" fill="#fff" stroke="#2a4a9a" stroke-width=".8"/></svg>
<svg style="left:781.0px;top:50.5px" width="12" height="12" viewBox="0 0 12 12"><path d="M1 3h10v8h-10z" fill="#eee" stroke="#666" stroke-width=".6"/><path d="M1 5h10M1 7h10M1 9h10M3.5 3v8M6 3v8M8.5 3v8" stroke="#888" stroke-width=".5"/><path d="M5 2l5 3-3 3z" fill="#c8a070"/></svg>
<svg style="left:796.0px;top:50.5px" width="12" height="12" viewBox="0 0 12 12"><path d="M1 6h10M6 1v10" stroke="#2a4a9a" stroke-width=".8"/><circle cx="6" cy="6" r="3" fill="#fff" stroke="#2a4a9a" stroke-width="1.2"/></svg>
<svg style="left:811.0px;top:50.5px" width="12" height="12" viewBox="0 0 12 12"><path d="M1 8l5-6 5 3-5 6z" fill="#7aaee8" stroke="#2a4a9a" stroke-width=".7"/><path d="M2 10l8-7" stroke="#e01010" stroke-width="1.3"/></svg>
<svg style="left:826.0px;top:50.5px" width="12" height="12" viewBox="0 0 12 12"><path d="M2 4l6-3 3 6-6 4z" fill="#7aaee8" stroke="#2a4a9a" stroke-width=".7"/><path d="M3 9l6-7" stroke="#e01010" stroke-width="1.3"/></svg>
<svg style="left:841.0px;top:50.5px" width="12" height="12" viewBox="0 0 12 12"><path d="M2 3l7-1 2 7-7 2z" fill="#8a9ed8" stroke="#2a4a9a" stroke-width=".7"/><path d="M3 6h7M6 3v6" stroke="#e01010" stroke-width="1.3"/></svg>
<svg style="left:860.0px;top:50.5px" width="12" height="12" viewBox="0 0 12 12"><circle cx="3" cy="3" r="1.5" fill="none" stroke="#aaa" stroke-width=".8"/><circle cx="9" cy="9" r="1.5" fill="none" stroke="#aaa" stroke-width=".8"/><path d="M4 4l4 4" stroke="#aaa" stroke-width=".8"/></svg>
<svg style="left:875.0px;top:50.5px" width="12" height="12" viewBox="0 0 12 12"><ellipse cx="6" cy="6" rx="5" ry="3" fill="none" stroke="#aaa" stroke-width="1"/><path d="M6 1v10" stroke="#aaa" stroke-width=".8"/></svg>
<svg style="left:890.0px;top:50.5px" width="12" height="12" viewBox="0 0 12 12"><path d="M6 1l-5 10M6 1l5 10M6 1v10" stroke="#aaa" stroke-width=".9" fill="none"/></svg>
<svg style="left:905.0px;top:50.5px" width="12" height="12" viewBox="0 0 12 12"><path d="M1 1l10 10M11 1l-10 10" stroke="#d01010" stroke-width="1.5"/><circle cx="1.3" cy="1.3" r="1" fill="#d01010"/><circle cx="10.7" cy="10.7" r="1" fill="#d01010"/></svg>
<svg style="left:920.0px;top:50.5px" width="12" height="12" viewBox="0 0 12 12"><rect x="0.5" y="2" width="11" height="9.5" rx="1" fill="#eee" stroke="#555" stroke-width=".9"/><circle cx="6" cy="7" r="2.5" fill="none" stroke="#444" stroke-width="1"/></svg>
<svg style="left:941.0px;top:50.5px" width="12" height="12" viewBox="0 0 12 12"><rect x="0.5" y="0.5" width="11" height="11" fill="#dfe" stroke="#555" stroke-width=".9"/><rect x="0.5" y="0.5" width="11" height="2.5" fill="#3a5aa0"/><path d="M2 10l8-6" stroke="#30a030" stroke-width="2"/></svg>
<svg style="left:964.0px;top:50.5px" width="12" height="12" viewBox="0 0 12 12"><path d="M1 11L10 2" stroke="#7aa0e0" stroke-width="1.8"/><circle cx="1.5" cy="10.5" r="1.1" fill="#e01010"/><circle cx="10" cy="2" r="1.1" fill="#e01010"/><path d="M7 9h3M8.5 9v2.5M7 11.5h3" stroke="#444" stroke-width=".6"/></svg>
<svg style="left:20.9px;top:55.0px" width="5" height="3"><path d="M0 0h5l-2.5 3z" fill="#111"/></svg>
<svg style="left:58.5px;top:55.0px" width="5" height="3"><path d="M0 0h5l-2.5 3z" fill="#111"/></svg>
<svg style="left:81.1px;top:55.0px" width="5" height="3"><path d="M0 0h5l-2.5 3z" fill="#111"/></svg>
<svg style="left:156.5px;top:55.0px" width="5" height="3"><path d="M0 0h5l-2.5 3z" fill="#111"/></svg>
<svg style="left:198.2px;top:55.0px" width="5" height="3"><path d="M0 0h5l-2.5 3z" fill="#111"/></svg>
<svg style="left:220.5px;top:55.0px" width="5" height="3"><path d="M0 0h5l-2.5 3z" fill="#111"/></svg>
<svg style="left:243.5px;top:55.0px" width="5" height="3"><path d="M0 0h5l-2.5 3z" fill="#111"/></svg>
<svg style="left:265.5px;top:55.0px" width="5" height="3"><path d="M0 0h5l-2.5 3z" fill="#111"/></svg>
<svg style="left:366.2px;top:55.0px" width="5" height="3"><path d="M0 0h5l-2.5 3z" fill="#111"/></svg>
<svg style="left:388.5px;top:55.0px" width="5" height="3"><path d="M0 0h5l-2.5 3z" fill="#111"/></svg>
<svg style="left:623.5px;top:55.0px" width="5" height="3"><path d="M0 0h5l-2.5 3z" fill="#111"/></svg>
<svg style="left:954.5px;top:55.0px" width="5" height="3"><path d="M0 0h5l-2.5 3z" fill="#111"/></svg>
<svg style="left:977.5px;top:55.0px" width="5" height="3"><path d="M0 0h5l-2.5 3z" fill="#111"/></svg>
<div style="left:89.5px;top:51px;width:1px;height:12px;background:#dcdcdc"></div>
<div style="left:138.7px;top:51px;width:1px;height:12px;background:#dcdcdc"></div>
<div style="left:179px;top:51px;width:1px;height:12px;background:#dcdcdc"></div>
<div style="left:289.6px;top:51px;width:1px;height:12px;background:#dcdcdc"></div>
<div style="left:398.5px;top:51px;width:1px;height:12px;background:#dcdcdc"></div>
<div style="left:418px;top:51px;width:1px;height:12px;background:#dcdcdc"></div>
<div style="left:512.8px;top:51px;width:1px;height:12px;background:#dcdcdc"></div>
<div style="left:606px;top:51px;width:1px;height:12px;background:#dcdcdc"></div>
<div style="left:633.5px;top:51px;width:1px;height:12px;background:#dcdcdc"></div>
<div style="left:778.5px;top:51px;width:1px;height:12px;background:#dcdcdc"></div>
<div style="left:856.7px;top:51px;width:1px;height:12px;background:#dcdcdc"></div>
<div style="left:936px;top:51px;width:1px;height:12px;background:#dcdcdc"></div>
<div style="left:390.7px;top:34.8px;width:167px;height:10.8px;background:#e6e6f1"></div>
<div style="left:393px;top:35.5px;width:19px;height:9.5px;background:#d9605a"></div>
<div class="t" style="left:395.5px;top:35.60px;font-size:7.4px;font-weight:400;color:#fff;transform:scaleX(0.919);">ULS</div>
<div class="t" style="left:415px;top:35.60px;font-size:7.4px;font-weight:400;color:#141414;transform:scaleX(0.976);">DS1</div>
<div class="t" style="left:449.3px;top:35.60px;font-size:7.4px;font-weight:400;color:#141414;transform:scaleX(0.776);">ULS (STR/GEO) - Permanent and ...</div>
<svg style="left:550px;top:38.5px" width="7" height="5" viewBox="0 0 7 5"><path d="M0.5 0.5l3 3 3-3" fill="none" stroke="#555" stroke-width=".9"/></svg>
<div style="left:559px;top:34.8px;width:18.5px;height:10.8px;background:#ececf3"></div>
<svg style="left:561.8px;top:37.7px" width="4" height="5" viewBox="0 0 4 5"><path d="M3.5 0L0.5 2.5 3.5 5z" fill="#111"/></svg>
<svg style="left:571.5px;top:37.7px" width="4" height="5" viewBox="0 0 4 5"><path d="M0.5 0L3.5 2.5 0.5 5z" fill="#111"/></svg>
<div style="left:636.4px;top:51.4px;width:124px;height:11.6px;background:#e6e6f1"></div>
<div style="left:638px;top:53px;width:8px;height:8px;background:#c8f4fb"></div>
<div class="t" style="left:649px;top:52.60px;font-size:7.4px;font-weight:400;color:#141414;transform:scaleX(0.829);">1 - Global XYZ</div>
<svg style="left:751px;top:55.5px" width="7" height="5" viewBox="0 0 7 5"><path d="M0.5 0.5l3 3 3-3" fill="none" stroke="#555" stroke-width=".9"/></svg>
<svg style="left:0px;top:20px" width="11" height="10" viewBox="0 0 11 10"><rect x="0" y="0" width="11" height="6" fill="#1d3f8f"/><rect x="2" y="1.5" width="4" height="1" fill="#fff"/><rect x="5" y="3.3" width="4" height="1" fill="#fff"/><rect x="0" y="7.5" width="11" height="2" fill="#1d3f8f"/></svg>
<svg style="left:5px;top:4px" width="10" height="11" viewBox="0 0 10 11"><rect x="0" y="6" width="10" height="5" fill="#1d3f8f"/><rect x="1" y="8" width="8" height=".8" fill="#fff"/><rect x="0" y="0.5" width="4" height="5" fill="#2a5ab0"/><rect x="4.5" y="0" width="5.5" height="5.5" fill="#f0d050"/></svg>
<div style="left:1px;top:66px;width:153px;height:14px;background:#d9e5f2"></div>
<div class="t" style="left:4px;top:68.30px;font-size:7.4px;font-weight:700;color:#2b2b2b;transform:scaleX(1.011);">Navigator - Data</div>
<svg style="left:133px;top:70px" width="6" height="6" viewBox="0 0 6 6"><rect x="2" y="0.5" width="3.5" height="3.5" fill="none" stroke="#333" stroke-width=".9"/><rect x="0.5" y="2" width="3.5" height="3.5" fill="#d9e5f2" stroke="#333" stroke-width=".9"/></svg>
<svg style="left:145.5px;top:70.5px" width="6" height="6" viewBox="0 0 6 6"><path d="M.6 .6l4.8 4.8M5.4 .6l-4.8 4.8" stroke="#222" stroke-width="1.1"/></svg>
<div style="left:1px;top:80px;width:153px;height:650px;background:#ffffff"></div>
<div style="left:154px;top:66px;width:2px;height:690px;background:#e3e3e8"></div>
<div style="left:1px;top:730px;width:153px;height:10px;background:#f0f0f0"></div>
<div style="left:13px;top:731px;width:63px;height:9px;background:#cdcdcd"></div>
<svg style="left:4px;top:731.5px" width="6" height="8" viewBox="0 0 6 8"><path d="M4.5 1L1.5 4l3 3" fill="none" stroke="#444" stroke-width="1.1"/></svg>
<svg style="left:146px;top:731.5px" width="6" height="8" viewBox="0 0 6 8"><path d="M1.5 1l3 3-3 3" fill="none" stroke="#444" stroke-width="1.1"/></svg>
<div style="left:1px;top:740px;width:153px;height:15px;background:#f0f0f0"></div>
<div style="left:1px;top:740px;width:20px;height:15px;background:#ffffff"></div>
<div style="left:21px;top:740px;width:19px;height:15px;background:#e8e8e8"></div>
<div style="left:40px;top:740px;width:20px;height:15px;background:#e8e8e8"></div>
<div style="left:1px;top:80px;width:153px;height:650px;overflow:hidden">
<svg style="position:absolute;left:2.0px;top:0.75px" width="10" height="10" viewBox="0 0 10 10"><rect x="0" y="0.5" width="10" height="6" fill="#1d3f8f"/><rect x="1.5" y="2" width="4" height="1" fill="#fff"/><rect x="5" y="3.5" width="4" height="1" fill="#fff"/><rect x="0" y="8" width="10" height="1.5" fill="#1d3f8f"/></svg>
<div class="t" style="left:15.5px;top:1.65px;font-size:7.3px;font-weight:400;color:#222;transform:scaleX(0.866)">RFEM</div>
<svg style="position:absolute;left:3.5px;top:14.08px" width="8" height="6"><path d="M1 1l3 3 3-3" fill="none" stroke="#333" stroke-width="1.1"/></svg>
<svg style="position:absolute;left:15.5px;top:12.08px" width="10" height="10" viewBox="0 0 10 10"><path d="M1.5 0.5h5l2.5 2.5v7h-7.5z" fill="#fff" stroke="#555" stroke-width="1"/><path d="M2 6q3-4 6-1v2h-6z" fill="#2f6fb5"/></svg>
<div class="t" style="left:28px;top:12.98px;font-size:7.3px;font-weight:700;color:#111;transform:scaleX(0.92)">Flächenkontakt.rf6*</div>
<svg style="position:absolute;left:15.5px;top:25.42px" width="8" height="6"><path d="M1 1l3 3 3-3" fill="none" stroke="#333" stroke-width="1.1"/></svg>
<svg style="position:absolute;left:27.0px;top:23.42px" width="10" height="10" viewBox="0 0 10 10"><path d="M0.5 2.5h3.5l1 1h4.5v6h-9z" fill="#f3e6a6" stroke="#d9c57a" stroke-width="1"/></svg>
<div class="t" style="left:40px;top:24.32px;font-size:7.3px;font-weight:400;color:#222;transform:scaleX(0.866)">Basic Objects</div>
<svg style="position:absolute;left:29.0px;top:35.25px" width="6" height="9"><path d="M1 1l3 3.5-3 3.5" fill="none" stroke="#666" stroke-width="1"/></svg>
<svg style="position:absolute;left:39.0px;top:34.75px" width="10" height="10" viewBox="0 0 10 10"><circle cx="3" cy="3" r="2.3" fill="#9aa8e8"/><circle cx="7.2" cy="3" r="2.3" fill="#e8d230"/><circle cx="3" cy="7.3" r="2.3" fill="#38b838"/><circle cx="7.2" cy="7.3" r="2.3" fill="#e02828"/></svg>
<div class="t" style="left:52.5px;top:35.65px;font-size:7.3px;font-weight:400;color:#222;transform:scaleX(0.866)">Materials</div>
<svg style="position:absolute;left:29.0px;top:46.58px" width="6" height="9"><path d="M1 1l3 3.5-3 3.5" fill="none" stroke="#666" stroke-width="1"/></svg>
<svg style="position:absolute;left:39.0px;top:46.08px" width="10" height="10" viewBox="0 0 10 10"><path d="M1 2h4v1.5h-1v3h1v1.5h-4v-1.5h1v-3h-1z" fill="#d82828"/><path d="M4 2l5-2v6l-5 2z" fill="#6b98d8"/></svg>
<div class="t" style="left:52.5px;top:46.98px;font-size:7.3px;font-weight:400;color:#222;transform:scaleX(0.866)">Sections</div>
<svg style="position:absolute;left:29.0px;top:57.91px" width="6" height="9"><path d="M1 1l3 3.5-3 3.5" fill="none" stroke="#666" stroke-width="1"/></svg>
<svg style="position:absolute;left:39.0px;top:57.41px" width="10" height="10" viewBox="0 0 10 10"><path d="M0.5 4l3-2h6v3l-3 2h-6z" fill="#9cc8f0" stroke="#6a9cd0" stroke-width=".8"/></svg>
<div class="t" style="left:52.5px;top:58.31px;font-size:7.3px;font-weight:400;color:#222;transform:scaleX(0.866)">Thicknesses</div>
<svg style="position:absolute;left:29.0px;top:69.25px" width="6" height="9"><path d="M1 1l3 3.5-3 3.5" fill="none" stroke="#666" stroke-width="1"/></svg>
<svg style="position:absolute;left:39.0px;top:68.75px" width="10" height="10" viewBox="0 0 10 10"><circle cx="5" cy="5" r="1.2" fill="#d01010"/></svg>
<div class="t" style="left:52.5px;top:69.65px;font-size:7.3px;font-weight:400;color:#222;transform:scaleX(0.866)">Nodes</div>
<svg style="position:absolute;left:29.0px;top:80.58px" width="6" height="9"><path d="M1 1l3 3.5-3 3.5" fill="none" stroke="#666" stroke-width="1"/></svg>
<svg style="position:absolute;left:39.0px;top:80.08px" width="10" height="10" viewBox="0 0 10 10"><path d="M1 9L9 1" stroke="#222" stroke-width="1"/><circle cx="1" cy="9" r="1.2" fill="#e01010"/><circle cx="9" cy="1" r="1.2" fill="#e01010"/></svg>
<div class="t" style="left:52.5px;top:80.98px;font-size:7.3px;font-weight:400;color:#222;transform:scaleX(0.866)">Lines</div>
<svg style="position:absolute;left:29.0px;top:91.91px" width="6" height="9"><path d="M1 1l3 3.5-3 3.5" fill="none" stroke="#666" stroke-width="1"/></svg>
<svg style="position:absolute;left:39.0px;top:91.41px" width="10" height="10" viewBox="0 0 10 10"><path d="M1 9L9 1" stroke="#7aa0e0" stroke-width="1.6"/><circle cx="1" cy="9" r="1.1" fill="#e01010"/><circle cx="9" cy="1" r="1.1" fill="#e01010"/><path d="M6 7h3M7.5 7v2.5M6 9.5h3" stroke="#444" stroke-width=".7"/></svg>
<div class="t" style="left:52.5px;top:92.31px;font-size:7.3px;font-weight:400;color:#222;transform:scaleX(0.866)">Members</div>
<svg style="position:absolute;left:29.0px;top:103.25px" width="6" height="9"><path d="M1 1l3 3.5-3 3.5" fill="none" stroke="#666" stroke-width="1"/></svg>
<svg style="position:absolute;left:39.0px;top:102.75px" width="10" height="10" viewBox="0 0 10 10"><path d="M0.5 5l4-3.5 5 3-4 3.5z" fill="#6a9ad6" stroke="#4d7fbf" stroke-width=".6"/></svg>
<div class="t" style="left:52.5px;top:103.65px;font-size:7.3px;font-weight:400;color:#222;transform:scaleX(0.866)">Surfaces</div>
<svg style="position:absolute;left:29.0px;top:114.58px" width="6" height="9"><path d="M1 1l3 3.5-3 3.5" fill="none" stroke="#666" stroke-width="1"/></svg>
<svg style="position:absolute;left:39.0px;top:114.08px" width="10" height="10" viewBox="0 0 10 10"><rect x="0.5" y="0.5" width="9" height="9" fill="#5b8ccc"/><circle cx="5" cy="5" r="2.4" fill="#fff"/></svg>
<div class="t" style="left:52.5px;top:114.98px;font-size:7.3px;font-weight:400;color:#222;transform:scaleX(0.866)">Openings</div>
<svg style="position:absolute;left:39.0px;top:125.41px" width="10" height="10" viewBox="0 0 10 10"><path d="M1 3l2-2h6v6l-2 2h-6z" fill="#9dc3ee"/><path d="M7 3h2v4l-2 2z" fill="#5e8fd0"/></svg>
<div class="t" style="left:52.5px;top:126.31px;font-size:7.3px;font-weight:400;color:#222;transform:scaleX(0.866)">Solids</div>
<svg style="position:absolute;left:39.0px;top:136.75px" width="10" height="10" viewBox="0 0 10 10"><path d="M1 9L9 1" stroke="#222" stroke-width="1"/><circle cx="1" cy="9" r="1.1" fill="#e01010"/><circle cx="9" cy="1" r="1.1" fill="#e01010"/><circle cx="5" cy="5" r="1.1" fill="#e01010"/><path d="M7 7l2 2" stroke="#222" stroke-width="1.4"/></svg>
<div class="t" style="left:52.5px;top:137.65px;font-size:7.3px;font-weight:400;color:#222;transform:scaleX(0.866)">Line Sets</div>
<svg style="position:absolute;left:39.0px;top:148.08px" width="10" height="10" viewBox="0 0 10 10"><path d="M1 9L9 1" stroke="#7aa0e0" stroke-width="1.6"/><circle cx="1" cy="9" r="1.1" fill="#e01010"/><circle cx="9" cy="1" r="1.1" fill="#e01010"/><path d="M7 7l2 2" stroke="#222" stroke-width="1.4"/></svg>
<div class="t" style="left:52.5px;top:148.98px;font-size:7.3px;font-weight:400;color:#222;transform:scaleX(0.866)">Member Sets</div>
<svg style="position:absolute;left:39.0px;top:159.41px" width="10" height="10" viewBox="0 0 10 10"><path d="M0.5 4.5l4-3.5 5 3-4 3.5z" fill="#6a9ad6"/><path d="M7 8l2 2" stroke="#222" stroke-width="1.4"/></svg>
<div class="t" style="left:52.5px;top:160.31px;font-size:7.3px;font-weight:400;color:#222;transform:scaleX(0.866)">Surface Sets</div>
<svg style="position:absolute;left:39.0px;top:170.75px" width="10" height="10" viewBox="0 0 10 10"><path d="M0.5 3l2-2h5v6l-2 2h-5z" fill="#9dc3ee"/><path d="M5.5 3h2v4l-2 2z" fill="#3e6fb0"/><path d="M7 8l2 2" stroke="#222" stroke-width="1.4"/></svg>
<div class="t" style="left:52.5px;top:171.65px;font-size:7.3px;font-weight:400;color:#222;transform:scaleX(0.866)">Solid Sets</div>
<svg style="position:absolute;left:15.5px;top:184.08px" width="8" height="6"><path d="M1 1l3 3 3-3" fill="none" stroke="#333" stroke-width="1.1"/></svg>
<svg style="position:absolute;left:27.0px;top:182.08px" width="10" height="10" viewBox="0 0 10 10"><path d="M0.5 2.5h3.5l1 1h4.5v6h-9z" fill="#f3e6a6" stroke="#d9c57a" stroke-width="1"/></svg>
<div class="t" style="left:40px;top:182.98px;font-size:7.3px;font-weight:400;color:#222;transform:scaleX(0.866)">Special Objects</div>
<svg style="position:absolute;left:39.0px;top:193.41px" width="10" height="10" viewBox="0 0 10 10"><path d="M1 4l4-3 4 3-4 5z" fill="#6fa0e0"/><path d="M2 6l6-3" stroke="#3060b0" stroke-width="1"/></svg>
<div class="t" style="left:52.5px;top:194.31px;font-size:7.3px;font-weight:400;color:#222;transform:scaleX(0.866)">Intersections</div>
<svg style="position:absolute;left:39.0px;top:204.74px" width="10" height="10" viewBox="0 0 10 10"><path d="M5 0.5l4.5 8h-9z" fill="#5a7fc8"/><path d="M2 7l3-3 3 3z" fill="#e04040"/></svg>
<div class="t" style="left:52.5px;top:205.64px;font-size:7.3px;font-weight:400;color:#222;transform:scaleX(0.866)">Surface Results Adjustments</div>
<svg style="position:absolute;left:28.5px;top:218.08px" width="8" height="6"><path d="M1 1l3 3 3-3" fill="none" stroke="#333" stroke-width="1.1"/></svg>
<svg style="position:absolute;left:39.0px;top:216.08px" width="10" height="10" viewBox="0 0 10 10"><rect x="0" y="3" width="10" height="4" fill="#f6b800"/><rect x="2.5" y="0" width="5" height="10" fill="#2b3f6f"/><rect x="2.5" y="3" width="5" height="4" fill="#ee6a10"/></svg>
<div class="t" style="left:52.5px;top:216.98px;font-size:7.3px;font-weight:400;color:#222;transform:scaleX(0.866)">Surface Contacts</div>
<svg style="position:absolute;left:52.0px;top:227.41px" width="10" height="10" viewBox="0 0 10 10"><rect x="0" y="1" width="8" height="8" fill="#c8f4fb"/></svg>
<div class="t" style="left:62.5px;top:228.31px;font-size:7.3px;font-weight:400;color:#222;transform:scaleX(0.866)">1 - Group 1 : 2 | Surface contact</div>
<div style="position:absolute;left:38px;top:238.24px;width:120px;height:11px;background:#cce4f7"></div>
<svg style="position:absolute;left:39.0px;top:238.74px" width="10" height="10" viewBox="0 0 10 10"><path d="M2 1v8M8 1v8" stroke="#223a70" stroke-width="1.4"/><path d="M3 3h4M3 5h4M3 7h4" stroke="#6a9ee8" stroke-width=".6"/><circle cx="2" cy="2" r="1" fill="#d02020"/><circle cx="2" cy="8" r="1" fill="#d02020"/></svg>
<div class="t" style="left:52.5px;top:239.64px;font-size:7.3px;font-weight:400;color:#222;transform:scaleX(0.866)">Rigid Links</div>
<svg style="position:absolute;left:39.0px;top:250.08px" width="10" height="10" viewBox="0 0 10 10"><path d="M0.5 8q4-1 9-6" stroke="#3a62d8" stroke-width="1.6" fill="none"/></svg>
<div class="t" style="left:52.5px;top:250.98px;font-size:7.3px;font-weight:400;color:#222;transform:scaleX(0.866)">Result Sections</div>
<svg style="position:absolute;left:39.0px;top:261.41px" width="10" height="10" viewBox="0 0 10 10"><path d="M1 1v9M4 1v9M7 1v9M0 3h10M0 6h10M0 9h10" stroke="#666" stroke-width=".7"/></svg>
<div class="t" style="left:52.5px;top:262.31px;font-size:7.3px;font-weight:400;color:#222;transform:scaleX(0.866)">Structure Modifications</div>
<svg style="position:absolute;left:39.0px;top:272.74px" width="10" height="10" viewBox="0 0 10 10"><path d="M1 3l3-2h5v6l-3 2h-5z" fill="#2b4f8f"/><circle cx="4.5" cy="5" r="1" fill="#7aa0e0"/></svg>
<div class="t" style="left:52.5px;top:273.64px;font-size:7.3px;font-weight:400;color:#222;transform:scaleX(0.866)">Blocks</div>
<svg style="position:absolute;left:16.0px;top:284.57px" width="6" height="9"><path d="M1 1l3 3.5-3 3.5" fill="none" stroke="#666" stroke-width="1"/></svg>
<svg style="position:absolute;left:27.0px;top:284.07px" width="10" height="10" viewBox="0 0 10 10"><path d="M0.5 2.5h3.5l1 1h4.5v6h-9z" fill="#f3e6a6" stroke="#d9c57a" stroke-width="1"/></svg>
<div class="t" style="left:40px;top:284.97px;font-size:7.3px;font-weight:400;color:#222;transform:scaleX(0.866)">Types for Nodes</div>
<svg style="position:absolute;left:16.0px;top:295.91px" width="6" height="9"><path d="M1 1l3 3.5-3 3.5" fill="none" stroke="#666" stroke-width="1"/></svg>
<svg style="position:absolute;left:27.0px;top:295.41px" width="10" height="10" viewBox="0 0 10 10"><path d="M0.5 2.5h3.5l1 1h4.5v6h-9z" fill="#f3e6a6" stroke="#d9c57a" stroke-width="1"/></svg>
<div class="t" style="left:40px;top:296.31px;font-size:7.3px;font-weight:400;color:#222;transform:scaleX(0.866)">Types for Lines</div>
<svg style="position:absolute;left:16.0px;top:307.24px" width="6" height="9"><path d="M1 1l3 3.5-3 3.5" fill="none" stroke="#666" stroke-width="1"/></svg>
<svg style="position:absolute;left:27.0px;top:306.74px" width="10" height="10" viewBox="0 0 10 10"><path d="M0.5 2.5h3.5l1 1h4.5v6h-9z" fill="#f3e6a6" stroke="#d9c57a" stroke-width="1"/></svg>
<div class="t" style="left:40px;top:307.64px;font-size:7.3px;font-weight:400;color:#222;transform:scaleX(0.866)">Types for Members</div>
<svg style="position:absolute;left:16.0px;top:318.57px" width="6" height="9"><path d="M1 1l3 3.5-3 3.5" fill="none" stroke="#666" stroke-width="1"/></svg>
<svg style="position:absolute;left:27.0px;top:318.07px" width="10" height="10" viewBox="0 0 10 10"><path d="M0.5 2.5h3.5l1 1h4.5v6h-9z" fill="#f3e6a6" stroke="#d9c57a" stroke-width="1"/></svg>
<div class="t" style="left:40px;top:318.97px;font-size:7.3px;font-weight:400;color:#222;transform:scaleX(0.866)">Types for Surfaces</div>
<svg style="position:absolute;left:16.0px;top:329.91px" width="6" height="9"><path d="M1 1l3 3.5-3 3.5" fill="none" stroke="#666" stroke-width="1"/></svg>
<svg style="position:absolute;left:27.0px;top:329.41px" width="10" height="10" viewBox="0 0 10 10"><path d="M0.5 2.5h3.5l1 1h4.5v6h-9z" fill="#f3e6a6" stroke="#d9c57a" stroke-width="1"/></svg>
<div class="t" style="left:40px;top:330.31px;font-size:7.3px;font-weight:400;color:#222;transform:scaleX(0.866)">Types for Solids</div>
<svg style="position:absolute;left:16.0px;top:341.24px" width="6" height="9"><path d="M1 1l3 3.5-3 3.5" fill="none" stroke="#666" stroke-width="1"/></svg>
<svg style="position:absolute;left:27.0px;top:340.74px" width="10" height="10" viewBox="0 0 10 10"><path d="M0.5 2.5h3.5l1 1h4.5v6h-9z" fill="#f3e6a6" stroke="#d9c57a" stroke-width="1"/></svg>
<div class="t" style="left:40px;top:341.64px;font-size:7.3px;font-weight:400;color:#222;transform:scaleX(0.866)">Types for Special Objects</div>
<svg style="position:absolute;left:16.0px;top:352.57px" width="6" height="9"><path d="M1 1l3 3.5-3 3.5" fill="none" stroke="#666" stroke-width="1"/></svg>
<svg style="position:absolute;left:27.0px;top:352.07px" width="10" height="10" viewBox="0 0 10 10"><path d="M0.5 2.5h3.5l1 1h4.5v6h-9z" fill="#f3e6a6" stroke="#d9c57a" stroke-width="1"/></svg>
<div class="t" style="left:40px;top:352.97px;font-size:7.3px;font-weight:400;color:#222;transform:scaleX(0.866)">Imperfections</div>
<svg style="position:absolute;left:15.5px;top:365.41px" width="8" height="6"><path d="M1 1l3 3 3-3" fill="none" stroke="#333" stroke-width="1.1"/></svg>
<svg style="position:absolute;left:27.0px;top:363.41px" width="10" height="10" viewBox="0 0 10 10"><path d="M0.5 2.5h3.5l1 1h4.5v6h-9z" fill="#f3e6a6" stroke="#d9c57a" stroke-width="1"/></svg>
<div class="t" style="left:40px;top:364.31px;font-size:7.3px;font-weight:400;color:#222;transform:scaleX(0.866)">Load Cases &amp; Combinations</div>
<svg style="position:absolute;left:29.0px;top:375.24px" width="6" height="9"><path d="M1 1l3 3.5-3 3.5" fill="none" stroke="#666" stroke-width="1"/></svg>
<svg style="position:absolute;left:39.0px;top:374.74px" width="10" height="10" viewBox="0 0 10 10"><path d="M5 0v7" stroke="#3070d8" stroke-width="1"/><path d="M3.5 5.5L5 8l1.5-2.5z" fill="#3070d8"/><path d="M0 9.5h10" stroke="#222" stroke-width="1"/></svg>
<div class="t" style="left:52.5px;top:375.64px;font-size:7.3px;font-weight:400;color:#222;transform:scaleX(0.866)">Load Cases</div>
<svg style="position:absolute;left:29.0px;top:386.57px" width="6" height="9"><path d="M1 1l3 3.5-3 3.5" fill="none" stroke="#666" stroke-width="1"/></svg>
<svg style="position:absolute;left:39.0px;top:386.07px" width="10" height="10" viewBox="0 0 10 10"><rect x="0.5" y="0.5" width="2.5" height="2" fill="none" stroke="#555" stroke-width=".7"/><rect x="0.5" y="7" width="2.5" height="2" fill="none" stroke="#555" stroke-width=".7"/><path d="M3 1.5h3l2 3.5-2 3.5h-3" fill="none" stroke="#222" stroke-width=".9"/><path d="M7 3l2.5 2-2.5 2z" fill="#2f7ff0"/></svg>
<div class="t" style="left:52.5px;top:386.97px;font-size:7.3px;font-weight:400;color:#222;transform:scaleX(0.866)">Actions</div>
<svg style="position:absolute;left:29.0px;top:397.91px" width="6" height="9"><path d="M1 1l3 3.5-3 3.5" fill="none" stroke="#666" stroke-width="1"/></svg>
<svg style="position:absolute;left:39.0px;top:397.41px" width="10" height="10" viewBox="0 0 10 10"><rect x="0.5" y="0.5" width="2.5" height="2" fill="none" stroke="#2f7ff0" stroke-width=".7"/><rect x="0.5" y="7" width="2.5" height="2" fill="none" stroke="#20a020" stroke-width=".7"/><path d="M3 1.5h3l2 3.5-2 3.5h-3" fill="none" stroke="#222" stroke-width=".9"/><path d="M7 3l2.5 2-2.5 2z" fill="#e020e0"/></svg>
<div class="t" style="left:52.5px;top:398.31px;font-size:7.3px;font-weight:400;color:#222;transform:scaleX(0.866)">Design Situations</div>
<svg style="position:absolute;left:39.0px;top:408.74px" width="10" height="10" viewBox="0 0 10 10"><rect x="0.5" y="0.5" width="2.5" height="2" fill="none" stroke="#555" stroke-width=".7"/><rect x="0.5" y="7" width="2.5" height="2" fill="none" stroke="#555" stroke-width=".7"/><path d="M3 1.5h3l2 3.5-2 3.5h-3" fill="none" stroke="#222" stroke-width=".9"/><path d="M7 3l2.5 2-2.5 2z" fill="#2f7ff0"/></svg>
<div class="t" style="left:52.5px;top:409.64px;font-size:7.3px;font-weight:400;color:#222;transform:scaleX(0.866)">Action Combinations</div>
<svg style="position:absolute;left:39.0px;top:420.07px" width="10" height="10" viewBox="0 0 10 10"><rect x="0.5" y="0.5" width="2.5" height="2" fill="none" stroke="#555" stroke-width=".7"/><rect x="0.5" y="7" width="2.5" height="2" fill="none" stroke="#555" stroke-width=".7"/><path d="M3 1.5h3l2 3.5-2 3.5h-3" fill="none" stroke="#222" stroke-width=".9"/><path d="M7 3l2.5 2-2.5 2z" fill="#20b020"/></svg>
<div class="t" style="left:52.5px;top:420.97px;font-size:7.3px;font-weight:400;color:#222;transform:scaleX(0.866)">Load Combinations</div>
<svg style="position:absolute;left:29.0px;top:431.90px" width="6" height="9"><path d="M1 1l3 3.5-3 3.5" fill="none" stroke="#666" stroke-width="1"/></svg>
<svg style="position:absolute;left:39.0px;top:431.40px" width="10" height="10" viewBox="0 0 10 10"><path d="M0 6l10-3" stroke="#d03030" stroke-width="1.6"/><path d="M0 6l5-1.5" stroke="#1f3f9f" stroke-width="1.6"/><circle cx="6" cy="8" r="1.5" fill="none" stroke="#4070e0" stroke-width=".9"/></svg>
<div class="t" style="left:52.5px;top:432.30px;font-size:7.3px;font-weight:400;color:#222;transform:scaleX(0.866)">Static Analysis Settings</div>
<svg style="position:absolute;left:29.0px;top:443.24px" width="6" height="9"><path d="M1 1l3 3.5-3 3.5" fill="none" stroke="#666" stroke-width="1"/></svg>
<svg style="position:absolute;left:39.0px;top:442.74px" width="10" height="10" viewBox="0 0 10 10"><rect x="0.5" y="1" width="2" height="1.8" fill="none" stroke="#777" stroke-width=".6"/><rect x="0.5" y="7" width="2" height="1.8" fill="none" stroke="#777" stroke-width=".6"/><path d="M3 2h2.5l2 3-2 3h-2.5" fill="none" stroke="#555" stroke-width=".8"/></svg>
<div class="t" style="left:50px;top:443.64px;font-size:7.3px;font-weight:400;color:#222;transform:scaleX(0.866)">Combination Wizards</div>
<svg style="position:absolute;left:16.0px;top:454.57px" width="6" height="9"><path d="M1 1l3 3.5-3 3.5" fill="none" stroke="#666" stroke-width="1"/></svg>
<svg style="position:absolute;left:27.0px;top:454.07px" width="10" height="10" viewBox="0 0 10 10"><path d="M0.5 2.5h3.5l1 1h4.5v6h-9z" fill="#f3e6a6" stroke="#d9c57a" stroke-width="1"/></svg>
<div class="t" style="left:40px;top:454.97px;font-size:7.3px;font-weight:400;color:#222;transform:scaleX(0.866)">Load Wizards</div>
<svg style="position:absolute;left:15.5px;top:467.40px" width="8" height="6"><path d="M1 1l3 3 3-3" fill="none" stroke="#333" stroke-width="1.1"/></svg>
<svg style="position:absolute;left:27.0px;top:465.40px" width="10" height="10" viewBox="0 0 10 10"><path d="M0.5 2.5h3.5l1 1h4.5v6h-9z" fill="#f3e6a6" stroke="#d9c57a" stroke-width="1"/></svg>
<div class="t" style="left:40px;top:466.30px;font-size:7.3px;font-weight:400;color:#222;transform:scaleX(0.866)">Loads</div>
<svg style="position:absolute;left:29.0px;top:477.24px" width="6" height="9"><path d="M1 1l3 3.5-3 3.5" fill="none" stroke="#666" stroke-width="1"/></svg>
<svg style="position:absolute;left:39.0px;top:476.74px" width="10" height="10" viewBox="0 0 10 10"><path d="M0.5 2.5h3.5l1 1h4.5v6h-9z" fill="#f3e6a6" stroke="#d9c57a" stroke-width="1"/></svg>
<div class="t" style="left:52.5px;top:477.64px;font-size:7.3px;font-weight:400;color:#222;transform:scaleX(0.866)">LC1 - Eigengewicht</div>
<svg style="position:absolute;left:16.0px;top:488.57px" width="6" height="9"><path d="M1 1l3 3.5-3 3.5" fill="none" stroke="#666" stroke-width="1"/></svg>
<svg style="position:absolute;left:27.0px;top:488.07px" width="10" height="10" viewBox="0 0 10 10"><path d="M0.5 2.5h3.5l1 1h4.5v6h-9z" fill="#f3e6a6" stroke="#d9c57a" stroke-width="1"/></svg>
<div class="t" style="left:40px;top:488.97px;font-size:7.3px;font-weight:400;color:#222;transform:scaleX(0.866)">Results</div>
<svg style="position:absolute;left:16.0px;top:499.90px" width="6" height="9"><path d="M1 1l3 3.5-3 3.5" fill="none" stroke="#666" stroke-width="1"/></svg>
<svg style="position:absolute;left:27.0px;top:499.40px" width="10" height="10" viewBox="0 0 10 10"><path d="M0.5 2.5h3.5l1 1h4.5v6h-9z" fill="#f3e6a6" stroke="#d9c57a" stroke-width="1"/></svg>
<div class="t" style="left:40px;top:500.30px;font-size:7.3px;font-weight:400;color:#222;transform:scaleX(0.866)">Guide Objects</div>
<svg style="position:absolute;left:27.0px;top:510.74px" width="10" height="10" viewBox="0 0 10 10"><path d="M0.5 2.5h3.5l1 1h4.5v6h-9z" fill="#f3e6a6" stroke="#d9c57a" stroke-width="1"/></svg>
<div class="t" style="left:40px;top:511.63px;font-size:7.3px;font-weight:400;color:#222;transform:scaleX(0.866)">Printout Reports</div>
</div>
<div style="left:156px;top:66px;width:868px;height:574px;background:#ffffff"></div>
<svg style="left:156px;top:66px" width="868" height="574" viewBox="0 0 868 574"><g transform="translate(-156,-66)">
<rect x="252" y="66" width="772" height="574" fill="#a5a5a5"/>
<path d="M726.5 66L795.7 66L963.5 119.9L963.5 629.8L726.2 554.7Z" fill="#73c6f6"/>
<path d="M795.7 66L963.5 119.9L963.5 629.8L726.2 554.7L726.5 66" fill="none" stroke="#7c8c98" stroke-width=".8"/>
<g stroke="#1f8a8a" stroke-width="1.1" stroke-dasharray="5 2.3 1 2.3" fill="none">
<path d="M714.2 66L714.2 576L914.6 640"/>
<path d="M875 66L949 89.5"/>
<path d="M975.2 137L975.2 640"/>
</g>
<path d="M560 234.2L799.8 214L800.4 507L560 527Z" fill="#67aad7"/>
<path d="M560 234.2L799.8 214L800.4 507L560 527" fill="none" stroke="#6a7f90" stroke-width=".8"/>
<path d="M845 210L845 503.4" stroke="#7a9cb4" stroke-width=".9"/>
<g stroke="#bdb77c" stroke-width="1.3">
<path d="M800 214L845 210"/><path d="M800 287L845 283"/><path d="M800 360.5L845 356.5"/><path d="M800 433.5L845 429.5"/><path d="M800.4 507L845 503.4"/>
</g>
<g fill="#f07a20"><circle cx="800" cy="214" r="1.6"/><circle cx="845" cy="210" r="1.6"/><circle cx="800.4" cy="507" r="1.6"/><circle cx="845" cy="503.4" r="1.6"/></g>

<g fill="#e81010"><circle cx="726.2" cy="554.7" r="1.8"/><circle cx="963.4" cy="629.8" r="1.8"/></g>
<!-- view cube -->
<path d="M949.3 87.2L986.8 83.5L1008.6 89.8L970 92.9Z" fill="#8c8c8c" stroke="#777" stroke-width=".6"/>
<path d="M949.3 87.2L970 92.9L970 137.7L949.3 131Z" fill="#9ea1a6" fill-opacity=".9" stroke="#777" stroke-width=".6"/>
<path d="M970 92.9L1008.6 89.8L1008.6 134.6L970 137.7Z" fill="#c9c9c9" stroke="#808080" stroke-width=".8"/>
<g stroke="#8a8a8a" stroke-width="1.2"><path d="M980 92.2V137"/><path d="M999.6 90.6V135.4"/><path d="M970 103.3L1008.6 100.8"/><path d="M970 124.7L1008.6 122"/>
<path d="M956 89V133.2" stroke-width=".8"/><path d="M949.3 97L970 103.3" stroke-width=".8"/><path d="M949.3 119L970 124.7" stroke-width=".8"/></g>
<text x="983.5" y="118.3" font-family="Liberation Sans" font-size="9" font-weight="700" fill="#d82020">-X</text>
<text x="956" y="116" font-family="Liberation Sans" font-size="7" font-weight="700" fill="#3a9a3a">-Y</text>
<!-- axis indicator -->
<path d="M184.4 611.6H198" stroke="#e02020" stroke-width="1.3"/><path d="M197 609.5L201 611.6L197 613.7Z" fill="#e02020"/>
<path d="M184.4 611.6V624" stroke="#2020e0" stroke-width="1.3"/><path d="M182.3 623L184.4 627.5L186.5 623Z" fill="#2020e0"/>
<circle cx="184.4" cy="611.6" r="1.5" fill="#20c020"/>
<text x="202.5" y="615" font-family="Liberation Sans" font-size="7" fill="#e02020">X</text>
<text x="181.5" y="636" font-family="Liberation Sans" font-size="7" fill="#2020e0">Z</text>
</g></svg>
<div style="left:155px;top:640px;width:869px;height:115px;background:#f7f7f7"></div>
<div style="left:158px;top:641px;width:866px;height:13px;background:#d9e5f2"></div>
<div class="t" style="left:161px;top:643.60px;font-size:7.4px;font-weight:700;color:#2b2b2b;transform:scaleX(1.011);">Summary</div>
<svg style="left:1001px;top:644.5px" width="7" height="7" viewBox="0 0 7 7"><rect x="2.5" y="0.5" width="4" height="4" fill="none" stroke="#333" stroke-width=".9"/><rect x="0.5" y="2.5" width="4" height="4" fill="#d9e5f2" stroke="#333" stroke-width=".9"/></svg>
<svg style="left:1013.5px;top:644.5px" width="7" height="7" viewBox="0 0 7 7"><path d="M.8 .8l5.4 5.4M6.2 .8l-5.4 5.4" stroke="#222" stroke-width="1.2"/></svg>
<div class="t" style="left:161px;top:655.80px;font-size:7.4px;font-weight:400;color:#141414;transform:scaleX(0.882);">Go To</div>
<div class="t" style="left:183.4px;top:655.80px;font-size:7.4px;font-weight:400;color:#141414;transform:scaleX(0.882);">Edit</div>
<div class="t" style="left:201px;top:655.80px;font-size:7.4px;font-weight:400;color:#141414;transform:scaleX(0.882);">Selection</div>
<div class="t" style="left:233.5px;top:655.80px;font-size:7.4px;font-weight:400;color:#141414;transform:scaleX(0.882);">View</div>
<div class="t" style="left:254px;top:655.80px;font-size:7.4px;font-weight:400;color:#141414;transform:scaleX(0.882);">Settings</div>
<div style="left:158.5px;top:668px;width:124px;height:12px;background:#e6e6f1"></div>
<svg style="left:159.3px;top:668.0px" width="12" height="12" viewBox="0 0 12 12"><rect x="0.5" y="0.5" width="10" height="10" fill="#fff" stroke="#555" stroke-width=".8"/><rect x="0.5" y="0.5" width="10" height="3" fill="#3a5aa0"/><path d="M2 9l7-3" stroke="#e03030" stroke-width="1.5"/><path d="M2 9l3-1.3" stroke="#1f3f9f" stroke-width="1.5"/></svg>
<div class="t" style="left:173.2px;top:669.60px;font-size:7.4px;font-weight:400;color:#141414;transform:scaleX(0.845);">Static Analysis</div>
<svg style="left:274px;top:672.5px" width="7" height="5" viewBox="0 0 7 5"><path d="M0.5 0.5l3 3 3-3" fill="none" stroke="#666" stroke-width=".9"/></svg>
<svg style="left:285.5px;top:671px" width="5" height="6" viewBox="0 0 5 6"><path d="M4 0L0.5 3 4 6z" fill="#111"/></svg>
<div style="left:292.7px;top:668px;width:9.3px;height:12px;background:#dadada"></div>
<svg style="left:295.5px;top:671px" width="5" height="6" viewBox="0 0 5 6"><path d="M0.5 0L4 3 0.5 6z" fill="#111"/></svg>
<div style="left:306px;top:668px;width:1px;height:13px;background:#dcdcdc"></div>
<div style="left:308.8px;top:668px;width:161px;height:12px;background:#e6e6f1"></div>
<svg style="left:309.5px;top:668.0px" width="12" height="12" viewBox="0 0 12 12"><rect x="0.5" y="0.5" width="10" height="10" fill="#fff" stroke="#555" stroke-width=".8"/><rect x="0.5" y="0.5" width="10" height="3" fill="#3a5aa0"/><path d="M2 9l7-3" stroke="#e03030" stroke-width="1.5"/><path d="M2 9l3-1.3" stroke="#1f3f9f" stroke-width="1.5"/></svg>
<div class="t" style="left:322.9px;top:669.60px;font-size:7.4px;font-weight:400;color:#141414;transform:scaleX(0.845);">Overview</div>
<svg style="left:467.5px;top:672.5px" width="7" height="5" viewBox="0 0 7 5"><path d="M0.5 0.5l3 3 3-3" fill="none" stroke="#666" stroke-width=".9"/></svg>
<div style="left:476.3px;top:668px;width:9px;height:12px;background:#dadada"></div>
<svg style="left:478.5px;top:671px" width="5" height="6" viewBox="0 0 5 6"><path d="M4 0L0.5 3 4 6z" fill="#111"/></svg>
<svg style="left:488.5px;top:671px" width="5" height="6" viewBox="0 0 5 6"><path d="M0.5 0L4 3 0.5 6z" fill="#111"/></svg>
<div style="left:497px;top:668px;width:1px;height:13px;background:#dcdcdc"></div>
<div style="left:501px;top:668px;width:186.5px;height:12px;background:#e6e6f1"></div>
<div style="left:503px;top:669.5px;width:7.3px;height:9px;background:#c8f4fb"></div>
<div style="left:512.3px;top:669.5px;width:7.7px;height:9px;background:#c8f4fb"></div>
<div style="left:521px;top:669.5px;width:18.5px;height:9px;background:#000"></div>
<div class="t" style="left:527.5px;top:669.60px;font-size:7.4px;font-weight:400;color:#fff;transform:scaleX(0.973);">G</div>
<div class="t" style="left:542.8px;top:669.60px;font-size:7.4px;font-weight:400;color:#141414;transform:scaleX(0.927);">LC1</div>
<div class="t" style="left:559.3px;top:669.60px;font-size:7.4px;font-weight:400;color:#141414;transform:scaleX(0.873);">Eigengewicht</div>
<svg style="left:659.5px;top:672.5px" width="7" height="5" viewBox="0 0 7 5"><path d="M0.5 0.5l3 3 3-3" fill="none" stroke="#666" stroke-width=".9"/></svg>
<div style="left:669px;top:668px;width:9.6px;height:12px;background:#dadada"></div>
<div style="left:679px;top:668px;width:9px;height:12px;background:#dadada"></div>
<svg style="left:671.5px;top:671px" width="5" height="6" viewBox="0 0 5 6"><path d="M4 0L0.5 3 4 6z" fill="#111"/></svg>
<svg style="left:681.5px;top:671px" width="5" height="6" viewBox="0 0 5 6"><path d="M0.5 0L4 3 0.5 6z" fill="#111"/></svg>
<div style="left:693px;top:666.8px;width:29px;height:13.700000000000045px;background:#cde5f8;border:1px solid #b5d8f5;box-sizing:border-box"></div>
<svg style="left:697.0px;top:668.0px" width="12" height="12" viewBox="0 0 12 12"><path d="M2 1h6v4h-6z" fill="#fff" stroke="#555" stroke-width=".8"/><path d="M5 5q4 3 0 6" stroke="#2a5ab0" stroke-width="1" fill="none"/></svg>
<svg style="left:708.0px;top:668.0px" width="12" height="12" viewBox="0 0 12 12"><path d="M4 1h6v4h-6z" fill="#fff" stroke="#555" stroke-width=".8"/><path d="M7 5q-4 3 0 6" stroke="#2a5ab0" stroke-width="1" fill="none"/></svg>
<svg style="left:729.0px;top:668.0px" width="12" height="12" viewBox="0 0 12 12"><path d="M0 10l12-3" stroke="#e03030" stroke-width="1.8"/><path d="M0 10l6-1.5" stroke="#1f3f9f" stroke-width="1.8"/><ellipse cx="7.5" cy="3" rx="3.5" ry="2.3" fill="#2a3f8f"/></svg>
<svg style="left:743.6px;top:668.0px" width="12" height="12" viewBox="0 0 12 12"><path d="M1 3h10" stroke="#777" stroke-width=".9" stroke-dasharray="1.5 1"/><path d="M1 9l10-2" stroke="#999" stroke-width="1.4"/></svg>
<svg style="left:763.0px;top:668.0px" width="12" height="12" viewBox="0 0 12 12"><rect x="0.5" y="2" width="11" height="8" fill="#aaa" stroke="#666" stroke-width=".8"/><path d="M4 2v8M8 2v8M.5 6h11" stroke="#eee" stroke-width=".6"/></svg>
<svg style="left:777.8px;top:668.0px" width="12" height="12" viewBox="0 0 12 12"><rect x="0.5" y="4" width="11" height="6" fill="#eee" stroke="#aaa" stroke-width=".8"/><path d="M2 2h6" stroke="#aaa" stroke-width=".8"/></svg>
<svg style="left:792.4px;top:668.0px" width="12" height="12" viewBox="0 0 12 12"><rect x="0.5" y="4" width="11" height="6" fill="#eee" stroke="#aaa" stroke-width=".8"/><path d="M2 2h6" stroke="#aaa" stroke-width=".8"/></svg>
<svg style="left:812.0px;top:668.0px" width="12" height="12" viewBox="0 0 12 12"><path d="M2 1v10h9M4 3h3M4 5h5M4 7h4" stroke="#bbb" stroke-width=".9" fill="none"/></svg>
<svg style="left:831.5px;top:668.0px" width="12" height="12" viewBox="0 0 12 12"><rect x="1" y="1" width="9" height="8" fill="#eee" stroke="#5a7a5a" stroke-width=".9"/><rect x="3" y="4" width="8" height="7" fill="#dfe9df" stroke="#3a8a3a" stroke-width=".9"/></svg>
<svg style="left:846.0px;top:668.0px" width="12" height="12" viewBox="0 0 12 12"><path d="M0.5 3h9l-3.5 4v5l-2-1v-4z" fill="#3aa0e8"/><rect x="6" y="0.5" width="5.5" height="4" fill="#fff" stroke="#2a4a9a" stroke-width=".8"/></svg>
<svg style="left:866.6px;top:668.0px" width="12" height="12" viewBox="0 0 12 12"><rect x="1" y="0.5" width="10" height="2" fill="#60c060"/><text x="0" y="9.5" font-size="6" font-family="Liberation Sans" font-weight="700" fill="#222" textLength="12" lengthAdjust="spacingAndGlyphs">0.00</text><path d="M5 11h6" stroke="#2a4a9a" stroke-width=".8"/></svg>
<div style="left:725px;top:667px;width:1px;height:14px;background:#dcdcdc"></div>
<div style="left:758px;top:667px;width:1px;height:14px;background:#dcdcdc"></div>
<div style="left:808px;top:667px;width:1px;height:14px;background:#dcdcdc"></div>
<div style="left:827px;top:667px;width:1px;height:14px;background:#dcdcdc"></div>
<div style="left:846px;top:667px;width:1px;height:14px;background:#dcdcdc"></div>
<div style="left:863px;top:667px;width:1px;height:14px;background:#dcdcdc"></div>
<div style="left:158px;top:683.5px;width:854px;height:6px;background:#e1e1e1"></div>
<div style="left:158px;top:689.5px;width:854px;height:19.5px;background:#efefef"></div>
<div style="left:158px;top:683.5px;width:36.5px;height:25.5px;background:#e3e3e3"></div>
<div style="left:194.5px;top:683.5px;width:1px;height:25.5px;background:#d6d6d6"></div>
<div style="left:412px;top:683.5px;width:1px;height:25.5px;background:#d6d6d6"></div>
<div style="left:461.6px;top:683.5px;width:1px;height:25.5px;background:#d6d6d6"></div>
<div style="left:511px;top:683.5px;width:1px;height:25.5px;background:#d6d6d6"></div>
<div class="t" style="left:287px;top:700.30px;font-size:7.4px;font-weight:400;color:#141414;transform:scaleX(0.873);">Description</div>
<div class="t" style="left:428px;top:700.30px;font-size:7.4px;font-weight:400;color:#141414;transform:scaleX(0.873);">Value</div>
<div class="t" style="left:480px;top:700.30px;font-size:7.4px;font-weight:400;color:#141414;transform:scaleX(0.873);">Unit</div>
<div class="t" style="left:752px;top:700.30px;font-size:7.4px;font-weight:400;color:#141414;transform:scaleX(0.873);">Notes</div>
<div style="left:158px;top:709px;width:854px;height:11px;background:#e8e8e8"></div>
<div class="t" style="left:160px;top:710.10px;font-size:7.4px;font-weight:400;color:#141414;transform:scaleX(0.873);">Sum of loads and the sum of support forces</div>
<div style="left:158px;top:720px;width:36.5px;height:21px;background:#e3e3e3"></div>
<div style="left:194.5px;top:720px;width:817.5px;height:10.5px;background:#fffbf2"></div>
<div style="left:194.5px;top:730.5px;width:817.5px;height:10.5px;background:#fdf8e8"></div>
<div style="left:194.5px;top:730px;width:817.5px;height:0.6px;background:#ece6d6"></div>
<div style="left:412px;top:720px;width:1px;height:21px;background:#ece8dc"></div>
<div style="left:461.6px;top:720px;width:1px;height:21px;background:#ece8dc"></div>
<div style="left:511px;top:720px;width:1px;height:21px;background:#ece8dc"></div>
<div class="t" style="left:196.5px;top:720.60px;font-size:7.4px;font-weight:400;color:#141414;transform:scaleX(0.873);">Sum of loads in X</div>
<div class="t" style="left:196.5px;top:731.10px;font-size:7.4px;font-weight:400;color:#141414;transform:scaleX(0.873);">Sum of support forces in X</div>
<div class="t" style="left:443px;top:720.60px;font-size:7.4px;font-weight:400;color:#141414;transform:scaleX(0.873);">0.000</div>
<div class="t" style="left:443px;top:731.10px;font-size:7.4px;font-weight:400;color:#141414;transform:scaleX(0.873);">0.000</div>
<div class="t" style="left:462.5px;top:720.60px;font-size:7.4px;font-weight:400;color:#141414;transform:scaleX(0.873);">kip</div>
<div class="t" style="left:462.5px;top:731.10px;font-size:7.4px;font-weight:400;color:#141414;transform:scaleX(0.873);">kip</div>
<div style="left:1012px;top:683.5px;width:12px;height:58px;background:#f0f0f0"></div>
<div style="left:1013px;top:694.4px;width:10px;height:11.2px;background:#cdcdcd"></div>
<svg style="left:1014px;top:687px" width="8" height="5" viewBox="0 0 8 5"><path d="M1 4l3-3 3 3" fill="none" stroke="#333" stroke-width="1"/></svg>
<svg style="left:1014px;top:734px" width="8" height="5" viewBox="0 0 8 5"><path d="M1 1l3 3 3-3" fill="none" stroke="#333" stroke-width="1"/></svg>
<div style="left:155px;top:741px;width:869px;height:14px;background:#f3f3f3"></div>
<svg style="left:161px;top:745px" width="6" height="6" viewBox="0 0 6 6"><path d="M0.5 0v6" stroke="#888" stroke-width=".9"/><path d="M5 0.5L1.8 3 5 5.5z" fill="#888"/></svg>
<svg style="left:172.5px;top:745px" width="4" height="6" viewBox="0 0 4 6"><path d="M3.5 0.5L.5 3 3.5 5.5z" fill="#999"/></svg>
<div class="t" style="left:187.5px;top:743.80px;font-size:7.4px;font-weight:400;color:#141414;transform:scaleX(0.942);">1 of 1</div>
<svg style="left:218.5px;top:745px" width="4" height="6" viewBox="0 0 4 6"><path d="M.5 0.5L3.5 3 .5 5.5z" fill="#999"/></svg>
<svg style="left:227px;top:745px" width="6" height="6" viewBox="0 0 6 6"><path d="M5.5 0v6" stroke="#888" stroke-width=".9"/><path d="M1 0.5L4.2 3 1 5.5z" fill="#888"/></svg>
<div style="left:234px;top:741px;width:35.5px;height:14px;background:#ffffff"></div>
<div class="t" style="left:238px;top:743.80px;font-size:7.4px;font-weight:400;color:#141414;transform:scaleX(0.919);">Summary</div>
<div style="left:534.5px;top:756.3px;width:21.0px;height:11.7px;background:#e6e6e6;border:1px solid #d8d8d8;box-sizing:border-box"></div>
<div class="t" style="left:537.0px;top:757.60px;font-size:7.4px;font-weight:400;color:#141414;transform:scaleX(0.825);">SNAP</div>
<div style="left:556.5px;top:756.3px;width:20.5px;height:11.7px;background:#e6e6e6;border:1px solid #d8d8d8;box-sizing:border-box"></div>
<div class="t" style="left:559.0px;top:757.60px;font-size:7.4px;font-weight:400;color:#141414;transform:scaleX(0.825);">GRID</div>
<div style="left:578px;top:756.3px;width:22px;height:11.7px;background:#e6e6e6;border:1px solid #d8d8d8;box-sizing:border-box"></div>
<div class="t" style="left:580.5px;top:757.60px;font-size:7.4px;font-weight:400;color:#141414;transform:scaleX(0.825);">LGRID</div>
<div style="left:601px;top:756.3px;width:27px;height:11.7px;background:#e6e6e6;border:1px solid #d8d8d8;box-sizing:border-box"></div>
<div class="t" style="left:603.5px;top:757.60px;font-size:7.4px;font-weight:400;color:#141414;transform:scaleX(0.825);">OSNAP</div>
<div style="left:677px;top:757px;width:1px;height:11px;background:#dcdcdc"></div>
<div class="t" style="left:744px;top:757.60px;font-size:7.4px;font-weight:400;color:#141414;transform:scaleX(0.825);">CS: Global XYZ</div>
<div style="left:822px;top:757px;width:1px;height:11px;background:#dcdcdc"></div>
<div class="t" style="left:838px;top:757.60px;font-size:7.4px;font-weight:400;color:#141414;transform:scaleX(0.825);">Plane: XY</div>
<div style="left:873px;top:757px;width:1px;height:11px;background:#dcdcdc"></div>
<div class="t" style="left:877px;top:757.60px;font-size:7.4px;font-weight:400;color:#141414;transform:scaleX(0.825);">X: -11.49 ft</div>
<div style="left:919px;top:757px;width:1px;height:11px;background:#dcdcdc"></div>
<div class="t" style="left:924px;top:757.60px;font-size:7.4px;font-weight:400;color:#141414;transform:scaleX(0.825);">Y: -895.34 ft</div>
<div style="left:967px;top:757px;width:1px;height:11px;background:#dcdcdc"></div>
<div class="t" style="left:970px;top:757.60px;font-size:7.4px;font-weight:400;color:#141414;transform:scaleX(0.886);">Z: 0.00 ft</div>
<div style="left:1013px;top:757px;width:1px;height:11px;background:#dcdcdc"></div>
<svg style="left:4px;top:743px" width="14" height="10" viewBox="0 0 14 10"><rect x="1" y="2" width="9" height="6" fill="#f0c020"/><rect x="4" y="0" width="9" height="7" fill="#fff" stroke="#3a70c0" stroke-width="1"/><path d="M8 6l2 4" stroke="#e02020" stroke-width="1.5"/></svg>
<svg style="left:25px;top:744px" width="12" height="8" viewBox="0 0 12 8"><ellipse cx="6" cy="4" rx="5.5" ry="3.5" fill="#3a3f8f"/><circle cx="6" cy="4" r="1.6" fill="#fff"/><circle cx="6" cy="4" r=".8" fill="#3a3f8f"/></svg>
<svg style="left:45px;top:744.5px" width="11" height="7" viewBox="0 0 11 7"><rect x="0" y="0" width="7" height="7" rx="1" fill="#555"/><path d="M7 3.5l4-3v6z" fill="#555"/></svg>
<div style="left:108px;top:180px;width:528px;height:430px;box-shadow:0 1px 4px rgba(0,0,0,.22)"></div>
<div style="left:108px;top:180px;width:528px;height:430px;background:#d4d4d8;border:1px solid #b9b9bd;box-sizing:border-box"></div>
<div style="left:109px;top:181px;width:526px;height:20px;background:#ffffff"></div>
<svg style="left:114px;top:185px" width="11" height="11" viewBox="0 0 11 11"><rect x="0" y="6" width="11" height="5" fill="#1d3f8f"/><rect x="1" y="8" width="9" height=".8" fill="#fff"/><rect x="0.5" y="0.5" width="4" height="5" fill="#2a5ab0"/><rect x="5" y="0" width="6" height="5.5" fill="#f0d050"/><path d="M7 1.5q2.5 0 2.5 2" stroke="#1d3f8f" fill="none" stroke-width="1"/></svg>
<div class="t" style="left:127.5px;top:186.30px;font-size:7.8px;font-weight:400;color:#141414;transform:scaleX(1.003);">New Rigid Link</div>
<div style="left:551px;top:190px;width:10px;height:1px;background:#dcdcdc"></div>
<div style="left:584px;top:186px;width:8px;height:8px;border:1px solid #444;box-sizing:border-box"></div>
<svg style="left:615.5px;top:186.5px" width="8" height="8" viewBox="0 0 8 8"><path d="M0.5 0.5L7.5 7.5M7.5 0.5L0.5 7.5" stroke="#555" stroke-width="1"/></svg>
<div style="left:115px;top:207px;width:304px;height:31px;background:#ffffff"></div>
<div class="t" style="left:119.4px;top:208.80px;font-size:7.4px;font-weight:700;color:#4f5f8f;transform:scaleX(0.975);">Rigid Link No.</div>
<div style="left:119px;top:222px;width:297px;height:13px;background:#e6e6f1"></div>
<div class="t" style="left:121.5px;top:225.30px;font-size:7.4px;font-weight:400;color:#141414;transform:scaleX(1.011);">1</div>
<div style="left:426px;top:207px;width:203px;height:31px;background:#ffffff"></div>
<div style="left:115.5px;top:245px;width:35px;height:14px;background:#ececee"></div>
<div class="t" style="left:125px;top:248.30px;font-size:7.4px;font-weight:400;color:#141414;transform:scaleX(1.011);">Main</div>
<div style="left:115px;top:258.5px;width:514px;height:117px;background:#ececee"></div>
<div style="left:115px;top:375px;width:514px;height:200px;background:#ececee"></div>
<div style="left:121px;top:264.5px;width:298px;height:139px;background:#ffffff"></div>
<div class="t" style="left:125px;top:266.30px;font-size:7.4px;font-weight:700;color:#4f5f8f;transform:scaleX(0.975);">Rigid Link of Objects</div>
<div class="t" style="left:125px;top:284.90px;font-size:7.4px;font-weight:400;color:#141414;transform:scaleX(0.951);">Rigid link type</div>
<div style="left:125px;top:297.5px;width:135px;height:13px;background:#e6e6f1;border-bottom:1.3px solid #5860a8;box-sizing:border-box"></div>
<div class="t" style="left:127px;top:299.30px;font-size:7.4px;font-weight:400;color:#141414;transform:scaleX(0.951);">Line to line</div>
<svg style="left:252px;top:301px" width="7" height="5" viewBox="0 0 7 5"><path d="M0.5 0.5l3 3 3-3" fill="none" stroke="#555" stroke-width=".9"/></svg>
<div class="t" style="left:125px;top:325.90px;font-size:7.4px;font-weight:400;color:#141414;transform:scaleX(0.951);">Line No.</div>
<div style="left:125px;top:340.5px;width:44px;height:12.5px;background:#e6e6f1"></div>
<div class="t" style="left:127px;top:343.30px;font-size:7.4px;font-weight:400;color:#141414;transform:scaleX(1.011);">9</div>
<div style="left:172.5px;top:340.5px;width:15.5px;height:12.5px;background:#cfe3f6"></div>
<svg style="left:174px;top:341px" width="12" height="11" viewBox="0 0 12 11"><path d="M2 1l3 3M5 1l-3 3" stroke="#d02020" stroke-width="1"/><path d="M5 4v6l1.5-1.5 1.5 2.5 1-.5-1.4-2.4h2.2z" fill="#fff" stroke="#333" stroke-width=".7"/></svg>
<div class="t" style="left:125px;top:368.40px;font-size:7.4px;font-weight:400;color:#141414;transform:scaleX(0.951);">Line No.</div>
<div style="left:125px;top:383px;width:44px;height:12.5px;background:#e6e6f1"></div>
<div class="t" style="left:127px;top:385.80px;font-size:7.4px;font-weight:400;color:#141414;transform:scaleX(1.011);">13</div>
<div style="left:172.5px;top:383px;width:15.5px;height:12.5px;background:#cfe3f6"></div>
<svg style="left:174px;top:383.5px" width="12" height="11" viewBox="0 0 12 11"><path d="M2 1l3 3M5 1l-3 3" stroke="#d02020" stroke-width="1"/><path d="M5 4v6l1.5-1.5 1.5 2.5 1-.5-1.4-2.4h2.2z" fill="#fff" stroke="#333" stroke-width=".7"/></svg>
<div style="left:121px;top:411px;width:298px;height:121px;background:#ffffff"></div>
<div class="t" style="left:125px;top:412.80px;font-size:7.4px;font-weight:700;color:#4f5f8f;transform:scaleX(0.975);">Options</div>
<div style="left:125px;top:432px;width:9px;height:9px;background:#fff;border:1px solid #333;box-sizing:border-box"></div>
<div class="t" style="left:138px;top:431.80px;font-size:7.4px;font-weight:400;color:#141414;transform:scaleX(0.987);">User-defined distribution</div>
<div style="left:125px;top:447.5px;width:9px;height:9px;background:#fff;border:1px solid #333;box-sizing:border-box"></div>
<svg style="left:125px;top:447.5px" width="9" height="9" viewBox="0 0 9 9"><path d="M1.8 4.6l1.8 1.9 3.8-4" fill="none" stroke="#222" stroke-width="1"/></svg>
<div class="t" style="left:138px;top:446.80px;font-size:7.4px;font-weight:400;color:#141414;transform:scaleX(0.987);">Ignore relative position</div>
<div style="left:121px;top:539px;width:298px;height:30px;background:#ffffff"></div>
<div class="t" style="left:125px;top:540.80px;font-size:7.4px;font-weight:700;color:#4f5f8f;transform:scaleX(0.975);">Comment</div>
<div style="left:125px;top:554px;width:271px;height:12.5px;background:#e6e6f1"></div>
<svg style="left:387px;top:557.5px" width="7" height="5" viewBox="0 0 7 5"><path d="M0.5 0.5l3 3 3-3" fill="none" stroke="#555" stroke-width=".9"/></svg>
<div style="left:400.5px;top:554px;width:14.5px;height:12.5px;background:#f4f4f4;border:1px solid #e0e0e0;box-sizing:border-box"></div>
<svg style="left:402px;top:556px" width="11" height="9" viewBox="0 0 11 9"><rect x="1" y="1.5" width="7" height="5" fill="#ddd" stroke="#aaa" stroke-width=".7"/><rect x="3" y="3" width="7" height="5" fill="#e8e8e8" stroke="#aaa" stroke-width=".7"/></svg>
<div style="left:426px;top:264.5px;width:197px;height:305px;background:#ffffff"></div>
<div class="t" style="left:429px;top:267.30px;font-size:7.4px;font-weight:400;color:#141414;transform:scaleX(0.967);">Rigid Link &#x27;Line to line&#x27;</div>
<svg style="left:426px;top:264.5px" width="197" height="305" viewBox="0 0 197 305">
<g transform="translate(-426,-264.5)">
<path d="M445 348.5L526 314L526 463L445 498.3Z" fill="#dcdce2" stroke="#5a5a6e" stroke-width="1"/>
<path d="M478.2 415.3L532 392L613 407.7L558.7 431Z" fill="#dcdce2"/><path d="M532 392L613 407.7L558.7 431L478.2 415.3" fill="none" stroke="#5a5a6e" stroke-width="1"/>
<path d="M478.2 415.3L526 394.6L526 424.7Z" fill="#c3c3cb"/>
<path d="M526 314L526 463" stroke="#5a5a6e" stroke-width="1"/>
<path d="M526 394.5L532 392" stroke="#5a5a6e" stroke-width="1"/>
<path d="M445 417.6L459 411.7M513 388L526 382.2" stroke="#5a5a6e" stroke-width="1"/>
<path d="M459 411.7L513 388" stroke="#5a5a6e" stroke-width="1" stroke-dasharray="3 3"/>
<g stroke="#98c6f0" stroke-width="1.3" fill="none">
<path d="M459 411.7L513 388" stroke-dasharray="3 3" stroke-dashoffset="3"/>
<path d="M465 412.9L519 389.3" stroke-dasharray="4 2.5"/>
<path d="M471.5 414.1L525.5 390.6" stroke-dasharray="4 2.5" stroke-dashoffset="2"/>
<path d="M478.2 415.3L532 392" stroke-dasharray="3 3" stroke-dashoffset="3"/>
</g>
<path d="M478.2 415.3L532 392" stroke="#4a4a5e" stroke-width=".9" stroke-dasharray="3 3"/>
<circle cx="445" cy="417.6" r="1.6" fill="#d03010"/><circle cx="526" cy="382.2" r="1.6" fill="#d03010"/>
<circle cx="478.2" cy="415.3" r="1.6" fill="#d03010"/><circle cx="532" cy="392" r="1.6" fill="#d03010"/>
<circle cx="459" cy="411.7" r="1.6" fill="#a020c0"/><circle cx="513" cy="388" r="1.6" fill="#a020c0"/>
</g></svg>
<div style="left:430px;top:553px;width:15px;height:13px;background:#cfe3f6"></div>
<svg style="left:431px;top:554px" width="13" height="11" viewBox="0 0 13 11"><rect x="1" y="0" width="6" height="4" fill="#3a9a3a"/><rect x="0" y="3" width="8" height="6" fill="#5a7ab8"/><path d="M8 6l4 2-4 2z" fill="#1d3f8f"/></svg>
<div style="left:109px;top:581px;width:526px;height:28px;background:#ffffff"></div>
<div style="left:115px;top:588px;width:16px;height:13px;background:#cfe3f6"></div>
<div style="left:137px;top:588px;width:16px;height:13px;background:#cfe3f6"></div>
<div style="left:159px;top:588px;width:16px;height:13px;background:#cfe3f6"></div>
<svg style="left:116px;top:588px" width="14" height="13" viewBox="0 0 14 13"><circle cx="3" cy="2" r="1.3" fill="#e02020"/><circle cx="3" cy="4.5" r="1.3" fill="#20a020"/><circle cx="5" cy="3" r="1.3" fill="#f0d020"/><path d="M2 12l2-7 2 7M3 9h2" stroke="#222" stroke-width="1" fill="none"/><rect x="7" y="5.5" width="6" height="4" fill="#fff" stroke="#1d3f8f" stroke-width=".9"/></svg>
<svg style="left:138px;top:588px" width="14" height="13" viewBox="0 0 14 13"><rect x="2" y="2" width="10" height="8" fill="#fff" stroke="#666" stroke-width=".8"/><path d="M3 6l4-3 4 3" fill="#7aa6d8"/><path d="M7 10v2" stroke="#666"/></svg>
<svg style="left:160px;top:588px" width="15" height="13" viewBox="0 0 15 13"><path d="M2.5 12.5C4 10 4 5 5.5 3.5S8 2.5 8.5 3" fill="none" stroke="#222" stroke-width="1.1"/><path d="M3.5 6.5h3.5" stroke="#222" stroke-width="1"/><circle cx="11" cy="3.5" r="2.3" fill="#2a5ab0"/><path d="M9 7.5h4M11 7.5v4M9 11.5h4" stroke="#333" stroke-width=".9"/></svg>
<div style="left:450px;top:588px;width:55px;height:15px;background:#e1e1e1;border:1.2px solid #3b7fd8;box-sizing:border-box"></div>
<div class="t" style="left:472.5px;top:592.10px;font-size:7.4px;font-weight:400;color:#111;transform:scaleX(0.879);">OK</div>
<div style="left:511px;top:588px;width:56px;height:15px;background:#e1e1e1;border:1px solid #cdcdcd;box-sizing:border-box"></div>
<div class="t" style="left:528px;top:592.10px;font-size:7.4px;font-weight:400;color:#111;transform:scaleX(0.895);">Cancel</div>
<div style="left:573px;top:588px;width:55px;height:15px;background:#e1e1e1;border:1px solid #cdcdcd;box-sizing:border-box"></div>
<div class="t" style="left:579px;top:592.10px;font-size:7.4px;font-weight:400;color:#111;transform:scaleX(0.974);">Apply &amp; Next</div>
<svg style="left:628px;top:603px" width="5" height="5" viewBox="0 0 5 5"><path d="M4 1v3h-3" fill="none" stroke="#aaa" stroke-width=".8" stroke-dasharray="1 1"/></svg>
</body></html>
